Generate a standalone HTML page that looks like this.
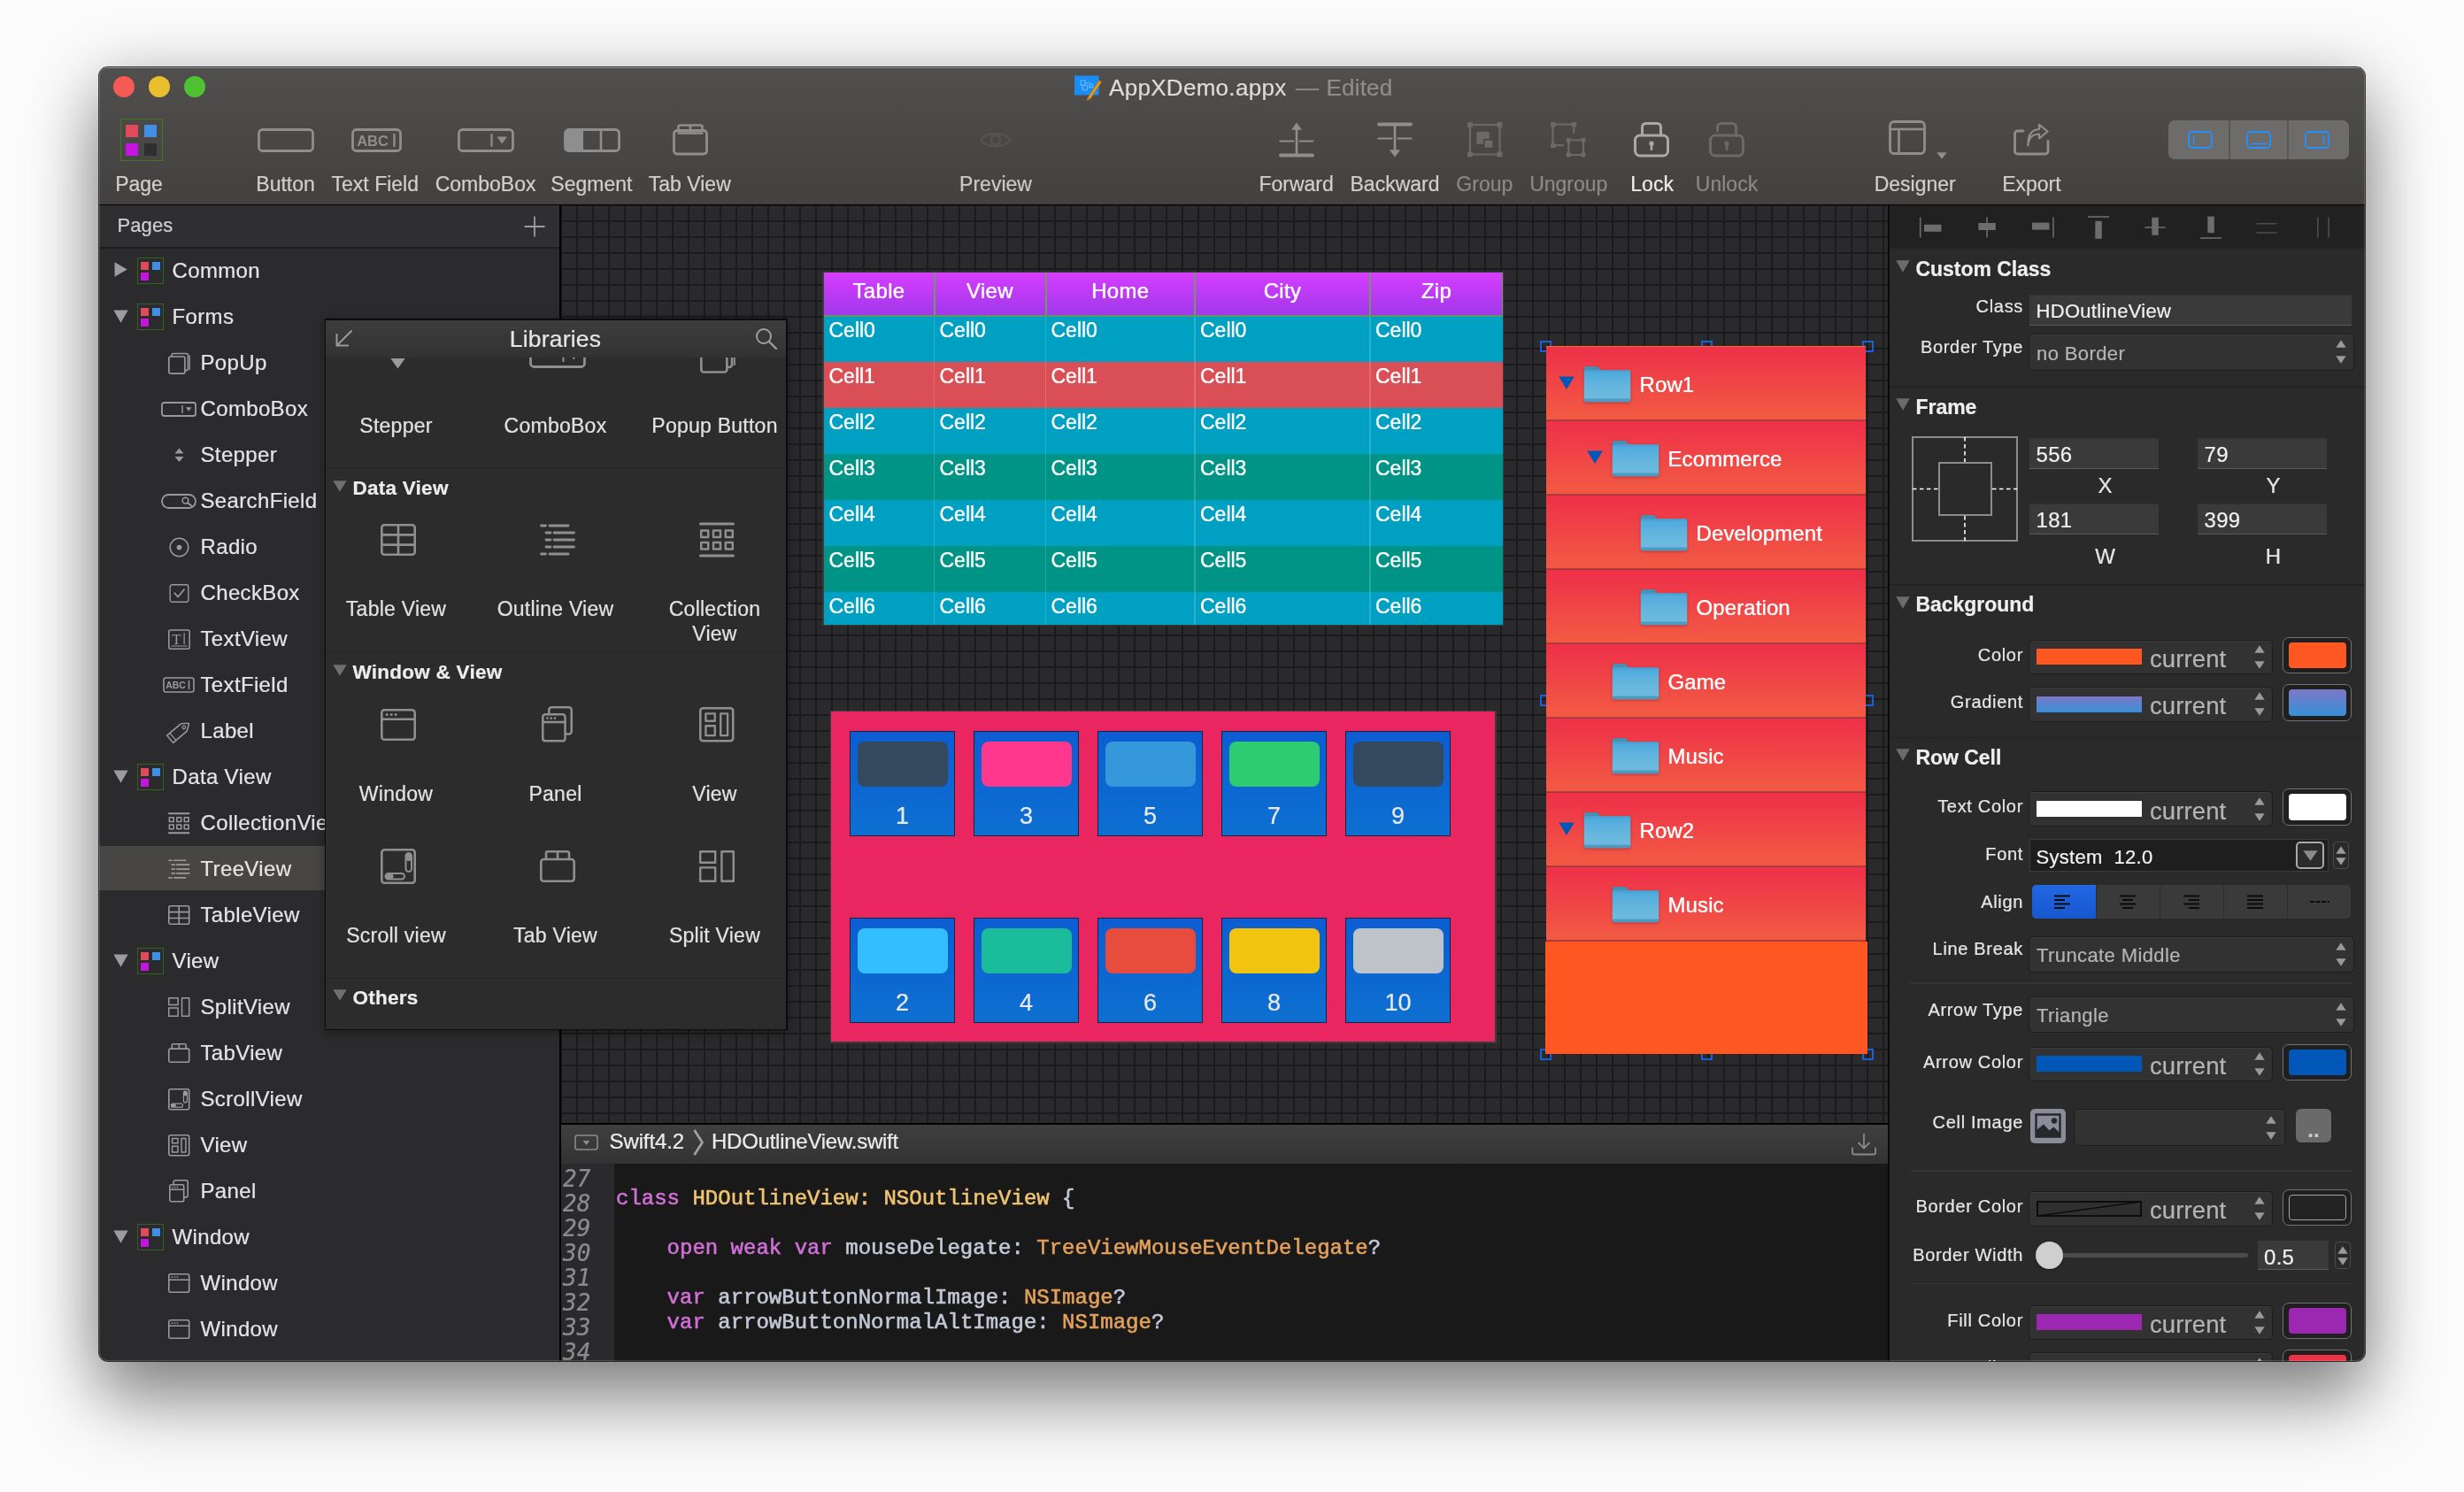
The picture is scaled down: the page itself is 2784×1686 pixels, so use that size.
<!DOCTYPE html>
<html lang="en"><head><meta charset="utf-8"><title>AppXDemo.appx</title>
<style>
html,body{margin:0;padding:0}
body{width:2784px;height:1686px;background:#fbfbfb;overflow:hidden;position:relative;font-family:"Liberation Sans",sans-serif}
.a{position:absolute;box-sizing:border-box}
.t{position:absolute;white-space:nowrap;overflow:visible;-webkit-text-stroke:0.22px currentColor}
svg{position:absolute;overflow:visible}
#win{position:absolute;left:112px;top:76px;width:2560px;height:1462px;border-radius:10px;overflow:hidden;background:#2b2b2d}
#shadow{position:absolute;left:112px;top:76px;width:2560px;height:1462px;border-radius:10px;box-shadow:0 0 0 1px rgba(0,0,0,.72),0 12px 75px rgba(0,0,0,.28),0 50px 80px rgba(0,0,0,.34)}
#edge{position:absolute;left:112px;top:76px;width:2560px;height:1462px;border-radius:10px;border:1px solid rgba(255,255,255,.16);box-sizing:border-box;pointer-events:none}
#in{position:absolute;left:-112px;top:-76px;width:2784px;height:1686px;will-change:transform}
</style></head>
<body>
<div id="shadow"></div>
<div id="win"><div id="in">
<div class="a" style="left:112px;top:76px;width:2560px;height:155px;background:linear-gradient(#514f4e,#424140);"></div>
<div class="a" style="left:112px;top:76px;width:2560px;height:1px;background:rgba(255,255,255,.28);"></div>
<div class="a" style="left:112px;top:231px;width:2560px;height:1px;background:#000;"></div>
<div class="a" style="left:127.80000000000001px;top:86.2px;width:24px;height:24px;border-radius:50%;background:#f55b54;"></div>
<div class="a" style="left:167.8px;top:86.2px;width:24px;height:24px;border-radius:50%;background:#e9bf2d;"></div>
<div class="a" style="left:207.8px;top:86.2px;width:24px;height:24px;border-radius:50%;background:#4ec232;"></div>
<svg class="a" style="left:1214px;top:85px;" width="30" height="28" viewBox="0 0 30 28"><rect x="0" y="0.5" width="27.5" height="22" fill="#1a8cf5"/><path d="M7,6h5v5h-5zM13,9h5M9,14a3,3 0 1 0 6,0a3,3 0 1 0 -6,0M17,12a2,2 0 1 0 4,0a2,2 0 1 0 -4,0" fill="none" stroke="#6fb9ff" stroke-width="1.2"/><path d="M28,6.5L16,24.5L14.8,27.8L18,26L30,8Z" fill="#f3b22c" stroke="#c98414" stroke-width="1.4"/><path d="M15,27.5l1.5,-2.5l1.1,1z" fill="#e05a6a"/></svg>
<div class="t" style="left:1253.0px;top:81.5px;width:600px;height:34px;line-height:34px;font-size:26px;color:#dcdcdc;text-align:left;letter-spacing:0.3px;">AppXDemo.appx</div>
<div class="t" style="left:1464.0px;top:81.5px;width:600px;height:34px;line-height:34px;font-size:26px;color:#8d8d8d;text-align:left;transform:scaleX(1.0);">—</div>
<div class="t" style="left:1498.5px;top:81.5px;width:600px;height:34px;line-height:34px;font-size:26px;color:#8d8d8d;text-align:left;letter-spacing:0.2px;">Edited</div>
<div class="a" style="left:136px;top:134px;width:48px;height:48px;border:1px solid #3f7a1c;"></div>
<div class="a" style="left:142px;top:141px;width:14px;height:14px;background:#e04a5a;"></div>
<div class="a" style="left:163px;top:141px;width:14px;height:14px;background:#3f8fe6;"></div>
<div class="a" style="left:142px;top:162px;width:14px;height:14px;background:#c414e0;"></div>
<div class="a" style="left:163px;top:162px;width:14px;height:14px;background:#2f2f30;"></div>
<div class="t" style="left:37.0px;top:193.3px;width:240px;height:30px;line-height:30px;font-size:23px;color:#cfcfcf;text-align:center;">Page</div>
<svg class="a" style="left:291px;top:144.5px;" width="64" height="27" viewBox="0 0 64 27"><rect x="1.5" y="1.5" width="61" height="24" rx="4" fill="none" stroke="#8e8e8e" stroke-width="2.8" stroke-linecap="round" stroke-linejoin="round" /></svg>
<div class="t" style="left:202.6px;top:193.3px;width:240px;height:30px;line-height:30px;font-size:23px;color:#cfcfcf;text-align:center;">Button</div>
<svg class="a" style="left:396.5px;top:144.5px;" width="57" height="27" viewBox="0 0 57 27"><rect x="1.5" y="1.5" width="54" height="24" rx="4" fill="none" stroke="#8e8e8e" stroke-width="2.8" stroke-linecap="round" stroke-linejoin="round" /><path d="M48.5,7V20" fill="none" stroke="#8e8e8e" stroke-width="2.4" stroke-linecap="round" stroke-linejoin="round" /><text x="24" y="19.8" font-family="Liberation Sans, sans-serif" font-weight="700" font-size="16.5" text-anchor="middle" fill="#8e8e8e">ABC</text></svg>
<div class="t" style="left:303.8px;top:193.3px;width:240px;height:30px;line-height:30px;font-size:23px;color:#cfcfcf;text-align:center;">Text Field</div>
<svg class="a" style="left:517px;top:144.5px;" width="64" height="27" viewBox="0 0 64 27"><rect x="1.5" y="1.5" width="61" height="24" rx="4" fill="none" stroke="#8e8e8e" stroke-width="2.8" stroke-linecap="round" stroke-linejoin="round" /><path d="M38.5,7V20" fill="none" stroke="#8e8e8e" stroke-width="2.2" stroke-linecap="round" stroke-linejoin="round" /><path d="M44.5,9.5h11.5l-5.75,8z" fill="#8e8e8e"/></svg>
<div class="t" style="left:428.6px;top:193.3px;width:240px;height:30px;line-height:30px;font-size:23px;color:#cfcfcf;text-align:center;">ComboBox</div>
<svg class="a" style="left:637px;top:144.5px;" width="64" height="27" viewBox="0 0 64 27"><rect x="1.5" y="1.5" width="61" height="24" rx="4" fill="none" stroke="#8e8e8e" stroke-width="2.8" stroke-linecap="round" stroke-linejoin="round" /><path d="M5,1.5H22V25.5H5a3.5,3.5 0 0 1 -3.5,-3.5V5a3.5,3.5 0 0 1 3.5,-3.5z" fill="#8e8e8e"/><path d="M42,1.5V25.5" fill="none" stroke="#8e8e8e" stroke-width="2.6" stroke-linecap="round" stroke-linejoin="round" /></svg>
<div class="t" style="left:548.4px;top:193.3px;width:240px;height:30px;line-height:30px;font-size:23px;color:#cfcfcf;text-align:center;">Segment</div>
<svg class="a" style="left:760px;top:140px;" width="40" height="36" viewBox="0 0 40 36"><rect x="1.5" y="7.5" width="37" height="26.5" rx="3.5" fill="none" stroke="#8e8e8e" stroke-width="2.8" stroke-linecap="round" stroke-linejoin="round" /><path d="M6.5,7.5V3.5a2,2 0 0 1 2,-2H31.5a2,2 0 0 1 2,2V7.5M20,1.5V10.5M6.5,10.5H33.5" fill="none" stroke="#8e8e8e" stroke-width="2.6" stroke-linecap="round" stroke-linejoin="round" /></svg>
<div class="t" style="left:659.3px;top:193.3px;width:240px;height:30px;line-height:30px;font-size:23px;color:#cfcfcf;text-align:center;">Tab View</div>
<svg class="a" style="left:1107px;top:145px;" width="36" height="26" viewBox="0 0 36 26"><path d="M1.5,13C7,3.5 29,3.5 34.5,13C29,22.5 7,22.5 1.5,13Z" fill="none" stroke="#565453" stroke-width="2.4" stroke-linecap="round" stroke-linejoin="round" /><circle cx="18" cy="13" r="5.2" fill="none" stroke="#565453" stroke-width="2.2" stroke-linecap="round" stroke-linejoin="round" /></svg>
<div class="t" style="left:1005.0px;top:193.3px;width:240px;height:30px;line-height:30px;font-size:23px;color:#c9c9c9;text-align:center;">Preview</div>
<svg class="a" style="left:1445px;top:137.5px;" width="40" height="40" viewBox="0 0 40 40"><path d="M2,37.5H38" fill="none" stroke="#8e8e8e" stroke-width="3.8" stroke-linecap="round" stroke-linejoin="round" /><path d="M1.5,21.5H16.5M23.5,21.5H38.5" fill="none" stroke="#8e8e8e" stroke-width="2.2" stroke-linecap="round" stroke-linejoin="round" /><path d="M20,36V8" fill="none" stroke="#8e8e8e" stroke-width="2.6" stroke-linecap="round" stroke-linejoin="round" /><path d="M20,0.5L26,8.8H14z" fill="#8e8e8e"/></svg>
<div class="t" style="left:1344.6px;top:193.3px;width:240px;height:30px;line-height:30px;font-size:23px;color:#cfcfcf;text-align:center;">Forward</div>
<svg class="a" style="left:1556px;top:137.5px;" width="40" height="40" viewBox="0 0 40 40"><path d="M2,2.5H38" fill="none" stroke="#8e8e8e" stroke-width="3.8" stroke-linecap="round" stroke-linejoin="round" /><path d="M1.5,18.5H16.5M23.5,18.5H38.5" fill="none" stroke="#8e8e8e" stroke-width="2.2" stroke-linecap="round" stroke-linejoin="round" /><path d="M20,4V32" fill="none" stroke="#8e8e8e" stroke-width="2.6" stroke-linecap="round" stroke-linejoin="round" /><path d="M20,39.5L26,31.2H14z" fill="#8e8e8e"/></svg>
<div class="t" style="left:1456.0px;top:193.3px;width:240px;height:30px;line-height:30px;font-size:23px;color:#cfcfcf;text-align:center;">Backward</div>
<svg class="a" style="left:1657.5px;top:138px;" width="39.5" height="39.5" viewBox="0 0 40 40"><rect x="3" y="3" width="34" height="34" fill="none" stroke="#6b6a69" stroke-width="2.2" stroke-linecap="round" stroke-linejoin="round" /><rect x="0" y="0" width="6" height="6" rx="1" fill="#6b6a69"/><rect x="34" y="0" width="6" height="6" rx="1" fill="#6b6a69"/><rect x="0" y="34" width="6" height="6" rx="1" fill="#6b6a69"/><rect x="34" y="34" width="6" height="6" rx="1" fill="#6b6a69"/><rect x="10.5" y="11" width="14.5" height="14" fill="#6b6a69"/><rect x="19" y="20" width="10.5" height="10" fill="#6b6a69" stroke="#464544" stroke-width="1.6"/></svg>
<div class="t" style="left:1557.3px;top:193.3px;width:240px;height:30px;line-height:30px;font-size:23px;color:#8a8988;text-align:center;">Group</div>
<svg class="a" style="left:1752px;top:138px;" width="39.5" height="39.5" viewBox="0 0 40 40"><path d="M26.5,12V2.5H2.5V26.5H14" fill="none" stroke="#6b6a69" stroke-width="2.2" stroke-linecap="round" stroke-linejoin="round" /><rect x="0" y="0" width="5.5" height="5.5" rx="1" fill="#6b6a69"/><rect x="24" y="0" width="5.5" height="5.5" rx="1" fill="#6b6a69"/><rect x="0" y="24" width="5.5" height="5.5" rx="1" fill="#6b6a69"/><rect x="20.5" y="20.5" width="17" height="17" fill="none" stroke="#6b6a69" stroke-width="2.2" stroke-linecap="round" stroke-linejoin="round" /><rect x="18" y="18" width="5" height="5" rx="1" fill="#6b6a69"/><rect x="35" y="18" width="5" height="5" rx="1" fill="#6b6a69"/><rect x="18" y="35" width="5" height="5" rx="1" fill="#6b6a69"/><rect x="35" y="35" width="5" height="5" rx="1" fill="#6b6a69"/></svg>
<div class="t" style="left:1652.3px;top:193.3px;width:240px;height:30px;line-height:30px;font-size:23px;color:#8a8988;text-align:center;">Ungroup</div>
<svg class="a" style="left:1846px;top:137.5px;" width="40" height="40" viewBox="0 0 40 40"><rect x="1.5" y="15" width="37" height="23" rx="5.5" fill="none" stroke="#a9a9a9" stroke-width="3" stroke-linecap="round" stroke-linejoin="round" /><path d="M9.5,15V5.5a4,4 0 0 1 4,-4H26.5a4,4 0 0 1 4,4V15" fill="none" stroke="#a9a9a9" stroke-width="3" stroke-linecap="round" stroke-linejoin="round" /><circle cx="20" cy="24.2" r="2.6" fill="#a9a9a9"/><path d="M20,25V31" fill="none" stroke="#a9a9a9" stroke-width="2.6" stroke-linecap="round" stroke-linejoin="round" /></svg>
<div class="t" style="left:1746.6px;top:193.3px;width:240px;height:30px;line-height:30px;font-size:23px;color:#ececec;text-align:center;">Lock</div>
<svg class="a" style="left:1930.5px;top:137.5px;" width="40" height="40" viewBox="0 0 40 40"><rect x="1.5" y="15" width="37" height="23" rx="5.5" fill="none" stroke="#6b6a69" stroke-width="3" stroke-linecap="round" stroke-linejoin="round" /><path d="M9.5,10V5.5a4,4 0 0 1 4,-4H26.5a4,4 0 0 1 4,4V15" fill="none" stroke="#6b6a69" stroke-width="3" stroke-linecap="round" stroke-linejoin="round" /><circle cx="20" cy="24.2" r="2.6" fill="#6b6a69"/><path d="M20,25V31" fill="none" stroke="#6b6a69" stroke-width="2.6" stroke-linecap="round" stroke-linejoin="round" /></svg>
<div class="t" style="left:1831.0px;top:193.3px;width:240px;height:30px;line-height:30px;font-size:23px;color:#8a8988;text-align:center;">Unlock</div>
<svg class="a" style="left:2133.5px;top:135.5px;" width="42" height="39" viewBox="0 0 42 39"><rect x="1.5" y="1.5" width="39" height="36" rx="4.5" fill="none" stroke="#8e8e8e" stroke-width="2.8" stroke-linecap="round" stroke-linejoin="round" /><path d="M1.5,10H40.5M11.5,10V37.5" fill="none" stroke="#8e8e8e" stroke-width="2.6" stroke-linecap="round" stroke-linejoin="round" /></svg>
<div class="t" style="left:2043.7px;top:193.3px;width:240px;height:30px;line-height:30px;font-size:23px;color:#cfcfcf;text-align:center;">Designer</div>
<svg class="a" style="left:2188px;top:172px;" width="12" height="8" viewBox="0 0 12 8"><path d="M0.3,0.3H11.7L6,7.8Z" fill="#8e8e8e"/></svg>
<svg class="a" style="left:2274.5px;top:140px;" width="41" height="36" viewBox="0 0 41 36"><path d="M11,8H4.5a3,3 0 0 0 -3,3V31a3,3 0 0 0 3,3H36a3,3 0 0 0 3,-3V19.5" fill="none" stroke="#8e8e8e" stroke-width="2.8" stroke-linecap="round" stroke-linejoin="round" /><path d="M16.5,24.5C17,15 22,11.5 29,11.5V16.5L38.5,8.5L29,0.8V6C20,6.5 16,13 16.5,24.5Z" fill="none" stroke="#8e8e8e" stroke-width="2.2" stroke-linecap="round" stroke-linejoin="round"  /></svg>
<div class="t" style="left:2175.4px;top:193.3px;width:240px;height:30px;line-height:30px;font-size:23px;color:#cfcfcf;text-align:center;">Export</div>
<div class="a" style="left:2450px;top:136px;width:204px;height:44px;background:#6d6c6b;border-radius:7px;"></div>
<div class="a" style="left:2518px;top:136px;width:1.5px;height:44px;background:#585756;"></div>
<div class="a" style="left:2584px;top:136px;width:1.5px;height:44px;background:#585756;"></div>
<svg class="a" style="left:2472px;top:148px;" width="28" height="20" viewBox="0 0 28 20"><rect x="1" y="1" width="26" height="18" rx="3.5" fill="none" stroke="#2392ff" stroke-width="1.8"/><path d="M6.5,4.5V15.5" stroke="#2392ff" stroke-width="1.6"/></svg>
<svg class="a" style="left:2538px;top:148px;" width="28" height="20" viewBox="0 0 28 20"><rect x="1" y="1" width="26" height="18" rx="3.5" fill="none" stroke="#2392ff" stroke-width="1.8"/><path d="M5,14.5H23" stroke="#2392ff" stroke-width="1.6"/></svg>
<svg class="a" style="left:2604px;top:148px;" width="28" height="20" viewBox="0 0 28 20"><rect x="1" y="1" width="26" height="18" rx="3.5" fill="none" stroke="#2392ff" stroke-width="1.8"/><path d="M21.5,4.5V15.5" stroke="#2392ff" stroke-width="1.6"/></svg>
<div class="a" style="left:112px;top:232px;width:520px;height:1306px;background:#2b2b2d;"></div>
<div class="a" style="left:112px;top:232px;width:520px;height:47px;background:#2f2f31;"></div>
<div class="a" style="left:112px;top:279px;width:520px;height:1.5px;background:#1d1d1e;"></div>
<div class="a" style="left:632px;top:232px;width:2px;height:1306px;background:#000;"></div>
<div class="t" style="left:132.5px;top:239.5px;width:600px;height:29px;line-height:29px;font-size:22px;color:#cfcfcf;text-align:left;letter-spacing:0.1px;">Pages</div>
<svg class="a" style="left:592px;top:243.5px;" width="24" height="24" viewBox="0 0 24 24"><path d="M12,0.5V23.5M0.5,12H23.5" stroke="#9c9c9c" stroke-width="1.8" fill="none"/></svg>
<svg class="a" style="left:129.0px;top:296.2px;" width="15" height="17" viewBox="0 0 15 17"><path d="M0.5,0.3V16.7L14.7,8.5Z" fill="#9c9c9c"/></svg>
<div class="a" style="left:155px;top:291.0px;width:30px;height:30px;border:1px solid #36641a;"></div>
<div class="a" style="left:159px;top:296.0px;width:9px;height:8.5px;background:#e04a5a;"></div>
<div class="a" style="left:172px;top:296.0px;width:9px;height:8.5px;background:#3f8fe6;"></div>
<div class="a" style="left:159px;top:308.0px;width:9px;height:9px;background:#c414e0;"></div>
<div class="t" style="left:194.5px;top:290.0px;width:600px;height:31px;line-height:31px;font-size:24px;color:#e4e4e4;text-align:left;letter-spacing:0.35px;">Common</div>
<svg class="a" style="left:127.5px;top:349.5px;" width="17" height="15" viewBox="0 0 17 15"><path d="M0.3,0.5H16.7L8.5,14.7Z" fill="#9c9c9c"/></svg>
<div class="a" style="left:155px;top:343.0px;width:30px;height:30px;border:1px solid #36641a;"></div>
<div class="a" style="left:159px;top:348.0px;width:9px;height:8.5px;background:#e04a5a;"></div>
<div class="a" style="left:172px;top:348.0px;width:9px;height:8.5px;background:#3f8fe6;"></div>
<div class="a" style="left:159px;top:360.0px;width:9px;height:9px;background:#c414e0;"></div>
<div class="t" style="left:194.5px;top:342.0px;width:600px;height:31px;line-height:31px;font-size:24px;color:#e4e4e4;text-align:left;letter-spacing:0.35px;">Forms</div>
<svg class="a" style="left:189.5px;top:397.5px;" width="25" height="25.0" viewBox="0 0 40 40"><rect x="1.3" y="8" width="29" height="30.5" rx="3" fill="none" stroke="#9a9a9a" stroke-width="2.6" stroke-linecap="round" stroke-linejoin="round" /><path d="M6.5,8V5.3a3,3 0 0 1 3,-3H33a3,3 0 0 1 3,3V30a3,3 0 0 1 -3,3H30.4" fill="none" stroke="#9a9a9a" stroke-width="2.6" stroke-linecap="round" stroke-linejoin="round" /><path d="M38.8,6V31" fill="none" stroke="#9a9a9a" stroke-width="2" stroke-linecap="round" stroke-linejoin="round" /></svg>
<div class="t" style="left:226.5px;top:394.0px;width:600px;height:31px;line-height:31px;font-size:24px;color:#e4e4e4;text-align:left;letter-spacing:0.35px;">PopUp</div>
<svg class="a" style="left:182.0px;top:453.5px;" width="40" height="17.0" viewBox="0 0 40 17"><rect x="1" y="1" width="38" height="15" rx="2.5" fill="none" stroke="#9a9a9a" stroke-width="1.8" stroke-linecap="round" stroke-linejoin="round" /><path d="M24,4.5V12.5" fill="none" stroke="#9a9a9a" stroke-width="1.4" stroke-linecap="round" stroke-linejoin="round" /><path d="M28,6.2h6.4l-3.2,4.6z" fill="#9a9a9a"/></svg>
<div class="t" style="left:226.5px;top:446.0px;width:600px;height:31px;line-height:31px;font-size:24px;color:#e4e4e4;text-align:left;letter-spacing:0.35px;">ComboBox</div>
<svg class="a" style="left:196.5px;top:505.8px;" width="11" height="16.5" viewBox="0 0 12 18"><path d="M6,0.5L11.5,7.2H0.5zM6,17.5L11.5,10.8H0.5z" fill="#9a9a9a"/></svg>
<div class="t" style="left:226.5px;top:498.0px;width:600px;height:31px;line-height:31px;font-size:24px;color:#e4e4e4;text-align:left;letter-spacing:0.35px;">Stepper</div>
<svg class="a" style="left:182.0px;top:557.5px;" width="40" height="17.0" viewBox="0 0 40 17"><rect x="1" y="1" width="38" height="15" rx="7.5" fill="none" stroke="#9a9a9a" stroke-width="1.8" stroke-linecap="round" stroke-linejoin="round" /><circle cx="27.5" cy="7.6" r="3.4" fill="none" stroke="#9a9a9a" stroke-width="1.5" stroke-linecap="round" stroke-linejoin="round" /><path d="M30,10.2L34.5,13.8" fill="none" stroke="#9a9a9a" stroke-width="2" stroke-linecap="round" stroke-linejoin="round" /></svg>
<div class="t" style="left:226.5px;top:550.0px;width:600px;height:31px;line-height:31px;font-size:24px;color:#e4e4e4;text-align:left;letter-spacing:0.35px;">SearchField</div>
<svg class="a" style="left:189.5px;top:605.5px;" width="25" height="25.0" viewBox="0 0 40 40"><circle cx="20" cy="20" r="16.5" fill="none" stroke="#9a9a9a" stroke-width="2.4" stroke-linecap="round" stroke-linejoin="round" /><circle cx="20" cy="20" r="4.6" fill="#9a9a9a"/></svg>
<div class="t" style="left:226.5px;top:602.0px;width:600px;height:31px;line-height:31px;font-size:24px;color:#e4e4e4;text-align:left;letter-spacing:0.35px;">Radio</div>
<svg class="a" style="left:190.5px;top:658.5px;" width="23" height="23.0" viewBox="0 0 40 40"><rect x="2" y="3" width="36" height="34" rx="4" fill="none" stroke="#9a9a9a" stroke-width="2.4" stroke-linecap="round" stroke-linejoin="round" /><path d="M11,19.5L17.5,27L29.5,12.5" fill="none" stroke="#9a9a9a" stroke-width="3" stroke-linecap="round" stroke-linejoin="round" /></svg>
<div class="t" style="left:226.5px;top:654.0px;width:600px;height:31px;line-height:31px;font-size:24px;color:#e4e4e4;text-align:left;letter-spacing:0.35px;">CheckBox</div>
<svg class="a" style="left:189.5px;top:709.5px;" width="25" height="25.0" viewBox="0 0 40 40"><rect x="1.3" y="3" width="37.4" height="34" rx="3" fill="none" stroke="#9a9a9a" stroke-width="2.4" stroke-linecap="round" stroke-linejoin="round" /><path d="M6,32H34" fill="none" stroke="#9a9a9a" stroke-width="1.8" stroke-linecap="round" stroke-linejoin="round" /><path d="M29,9V28" fill="none" stroke="#9a9a9a" stroke-width="2" stroke-linecap="round" stroke-linejoin="round" /><text x="15" y="28.5" font-family="Liberation Serif, serif" font-size="27" text-anchor="middle" fill="#9a9a9a">T</text></svg>
<div class="t" style="left:226.5px;top:706.0px;width:600px;height:31px;line-height:31px;font-size:24px;color:#e4e4e4;text-align:left;letter-spacing:0.35px;">TextView</div>
<svg class="a" style="left:184.0px;top:765.0px;" width="36" height="18.0" viewBox="0 0 36 18"><rect x="1" y="1" width="34" height="16" rx="2.5" fill="none" stroke="#9a9a9a" stroke-width="1.6" stroke-linecap="round" stroke-linejoin="round" /><path d="M29.5,4.5V13.5" fill="none" stroke="#9a9a9a" stroke-width="1.5" stroke-linecap="round" stroke-linejoin="round" /><text x="14.5" y="13.2" font-family="Liberation Sans, sans-serif" font-weight="700" font-size="10.5" text-anchor="middle" fill="#9a9a9a">ABC</text></svg>
<div class="t" style="left:226.5px;top:758.0px;width:600px;height:31px;line-height:31px;font-size:24px;color:#e4e4e4;text-align:left;letter-spacing:0.35px;">TextField</div>
<svg class="a" style="left:186.5px;top:810.5px;" width="31" height="31.0" viewBox="0 0 40 40"><g transform="rotate(-40 20 20)"><path d="M2.5,13H28a3,3 0 0 1 1.8,0.6L37.5,19a1.2,1.2 0 0 1 0,2L29.8,26.4a3,3 0 0 1 -1.8,0.6H2.5Z" fill="none" stroke="#9a9a9a" stroke-width="2" stroke-linecap="round" stroke-linejoin="round" /><circle cx="29" cy="20" r="2.3" fill="none" stroke="#9a9a9a" stroke-width="1.6" stroke-linecap="round" stroke-linejoin="round" /><path d="M8,13V27" fill="none" stroke="#9a9a9a" stroke-width="1.6" stroke-linecap="round" stroke-linejoin="round" /></g></svg>
<div class="t" style="left:226.5px;top:810.0px;width:600px;height:31px;line-height:31px;font-size:24px;color:#e4e4e4;text-align:left;letter-spacing:0.35px;">Label</div>
<svg class="a" style="left:127.5px;top:869.5px;" width="17" height="15" viewBox="0 0 17 15"><path d="M0.3,0.5H16.7L8.5,14.7Z" fill="#9c9c9c"/></svg>
<div class="a" style="left:155px;top:863.0px;width:30px;height:30px;border:1px solid #36641a;"></div>
<div class="a" style="left:159px;top:868.0px;width:9px;height:8.5px;background:#e04a5a;"></div>
<div class="a" style="left:172px;top:868.0px;width:9px;height:8.5px;background:#3f8fe6;"></div>
<div class="a" style="left:159px;top:880.0px;width:9px;height:9px;background:#c414e0;"></div>
<div class="t" style="left:194.5px;top:862.0px;width:600px;height:31px;line-height:31px;font-size:24px;color:#e4e4e4;text-align:left;letter-spacing:0.35px;">Data View</div>
<svg class="a" style="left:189.8px;top:917.8px;" width="24.5" height="24.5" viewBox="0 0 40 40"><path d="M1.5,2H38.5M1.5,38H38.5" fill="none" stroke="#9a9a9a" stroke-width="3" stroke-linecap="round" stroke-linejoin="round" /><rect x="2.2" y="9.5" width="8" height="7.5" fill="none" stroke="#9a9a9a" stroke-width="2.5" stroke-linecap="round" stroke-linejoin="round" /><rect x="16" y="9.5" width="8" height="7.5" fill="none" stroke="#9a9a9a" stroke-width="2.5" stroke-linecap="round" stroke-linejoin="round" /><rect x="29.8" y="9.5" width="8" height="7.5" fill="none" stroke="#9a9a9a" stroke-width="2.5" stroke-linecap="round" stroke-linejoin="round" /><rect x="2.2" y="23" width="8" height="7.5" fill="none" stroke="#9a9a9a" stroke-width="2.5" stroke-linecap="round" stroke-linejoin="round" /><rect x="16" y="23" width="8" height="7.5" fill="none" stroke="#9a9a9a" stroke-width="2.5" stroke-linecap="round" stroke-linejoin="round" /><rect x="29.8" y="23" width="8" height="7.5" fill="none" stroke="#9a9a9a" stroke-width="2.5" stroke-linecap="round" stroke-linejoin="round" /></svg>
<div class="t" style="left:226.5px;top:914.0px;width:600px;height:31px;line-height:31px;font-size:24px;color:#e4e4e4;text-align:left;letter-spacing:0.35px;">CollectionView</div>
<div class="a" style="left:112px;top:955.5px;width:520px;height:50px;background:#474645;"></div>
<svg class="a" style="left:189.8px;top:971.0px;" width="24.5" height="22.1" viewBox="0 0 40 36"><path d="M1.5,2h5M11,2h21M7,10h5M16,10h22.5M7,18h5M16,18h22.5M7,26h5M16,26h22.5M1.5,34h5M11,34h21" fill="none" stroke="#9a9a9a" stroke-width="2.8" stroke-linecap="round" stroke-linejoin="round" /></svg>
<div class="t" style="left:226.5px;top:966.0px;width:600px;height:31px;line-height:31px;font-size:24px;color:#e4e4e4;text-align:left;letter-spacing:0.35px;">TreeView</div>
<svg class="a" style="left:189.8px;top:1023.0px;" width="24.5" height="22.1" viewBox="0 0 40 36"><rect x="1.3" y="1.3" width="37.4" height="33.4" rx="3" fill="none" stroke="#9a9a9a" stroke-width="2.6" stroke-linecap="round" stroke-linejoin="round" /><path d="M20,1.3V34.7M1.3,12.4H38.7M1.3,23.6H38.7" fill="none" stroke="#9a9a9a" stroke-width="2.6" stroke-linecap="round" stroke-linejoin="round" /></svg>
<div class="t" style="left:226.5px;top:1018.0px;width:600px;height:31px;line-height:31px;font-size:24px;color:#e4e4e4;text-align:left;letter-spacing:0.35px;">TableView</div>
<svg class="a" style="left:127.5px;top:1077.5px;" width="17" height="15" viewBox="0 0 17 15"><path d="M0.3,0.5H16.7L8.5,14.7Z" fill="#9c9c9c"/></svg>
<div class="a" style="left:155px;top:1071.0px;width:30px;height:30px;border:1px solid #36641a;"></div>
<div class="a" style="left:159px;top:1076.0px;width:9px;height:8.5px;background:#e04a5a;"></div>
<div class="a" style="left:172px;top:1076.0px;width:9px;height:8.5px;background:#3f8fe6;"></div>
<div class="a" style="left:159px;top:1088.0px;width:9px;height:9px;background:#c414e0;"></div>
<div class="t" style="left:194.5px;top:1070.0px;width:600px;height:31px;line-height:31px;font-size:24px;color:#e4e4e4;text-align:left;letter-spacing:0.35px;">View</div>
<svg class="a" style="left:189.8px;top:1127.0px;" width="24.5" height="22.1" viewBox="0 0 40 36"><rect x="1.2" y="1.2" width="17" height="12.6" fill="none" stroke="#9a9a9a" stroke-width="2.4" stroke-linecap="round" stroke-linejoin="round" /><rect x="1.2" y="19.4" width="17" height="15.4" fill="none" stroke="#9a9a9a" stroke-width="2.4" stroke-linecap="round" stroke-linejoin="round" /><rect x="25.4" y="1.2" width="13.4" height="33.6" fill="none" stroke="#9a9a9a" stroke-width="2.4" stroke-linecap="round" stroke-linejoin="round" /></svg>
<div class="t" style="left:226.5px;top:1122.0px;width:600px;height:31px;line-height:31px;font-size:24px;color:#e4e4e4;text-align:left;letter-spacing:0.35px;">SplitView</div>
<svg class="a" style="left:189.8px;top:1179.0px;" width="24.5" height="22.1" viewBox="0 0 40 36"><rect x="1.3" y="10" width="37.4" height="24.7" rx="3" fill="none" stroke="#9a9a9a" stroke-width="2.6" stroke-linecap="round" stroke-linejoin="round" /><path d="M7,10V3.3a2,2 0 0 1 2,-2H31a2,2 0 0 1 2,2V10M20,1.3V10" fill="none" stroke="#9a9a9a" stroke-width="2.6" stroke-linecap="round" stroke-linejoin="round" /></svg>
<div class="t" style="left:226.5px;top:1174.0px;width:600px;height:31px;line-height:31px;font-size:24px;color:#e4e4e4;text-align:left;letter-spacing:0.35px;">TabView</div>
<svg class="a" style="left:189.8px;top:1229.8px;" width="24.5" height="24.5" viewBox="0 0 40 40"><rect x="1.3" y="1.3" width="37.4" height="37.4" rx="3" fill="none" stroke="#9a9a9a" stroke-width="2.6" stroke-linecap="round" stroke-linejoin="round" /><rect x="5.5" y="28" width="21.5" height="6.5" rx="3.25" fill="none" stroke="#9a9a9a" stroke-width="2" stroke-linecap="round" stroke-linejoin="round" /><rect x="5.5" y="28" width="9" height="6.5" rx="3.25" fill="#9a9a9a"/><rect x="28.5" y="5" width="6.5" height="21" rx="3.25" fill="none" stroke="#9a9a9a" stroke-width="2" stroke-linecap="round" stroke-linejoin="round" /><rect x="28.5" y="5" width="6.5" height="9" rx="3.25" fill="#9a9a9a"/></svg>
<div class="t" style="left:226.5px;top:1226.0px;width:600px;height:31px;line-height:31px;font-size:24px;color:#e4e4e4;text-align:left;letter-spacing:0.35px;">ScrollView</div>
<svg class="a" style="left:189.8px;top:1281.8px;" width="24.5" height="24.5" viewBox="0 0 40 40"><rect x="1.3" y="1.3" width="37.4" height="37.4" rx="3" fill="none" stroke="#9a9a9a" stroke-width="2.6" stroke-linecap="round" stroke-linejoin="round" /><rect x="7.5" y="7.5" width="10.5" height="8.5" fill="none" stroke="#9a9a9a" stroke-width="2.4" stroke-linecap="round" stroke-linejoin="round" /><rect x="7.5" y="21.5" width="10.5" height="11" fill="none" stroke="#9a9a9a" stroke-width="2.4" stroke-linecap="round" stroke-linejoin="round" /><rect x="24.5" y="7.5" width="8" height="25" fill="none" stroke="#9a9a9a" stroke-width="2.4" stroke-linecap="round" stroke-linejoin="round" /></svg>
<div class="t" style="left:226.5px;top:1278.0px;width:600px;height:31px;line-height:31px;font-size:24px;color:#e4e4e4;text-align:left;letter-spacing:0.35px;">View</div>
<svg class="a" style="left:191.0px;top:1333.2px;" width="22" height="25.7" viewBox="0 0 36 42"><rect x="1.3" y="9.5" width="26" height="31" rx="3" fill="none" stroke="#9a9a9a" stroke-width="2.6" stroke-linecap="round" stroke-linejoin="round" /><path d="M1.3,18.5H27.3" fill="none" stroke="#9a9a9a" stroke-width="2.6" stroke-linecap="round" stroke-linejoin="round" /><path d="M8.5,9.5V4.3a3,3 0 0 1 3,-3H31.7a3,3 0 0 1 3,3V29.5a3,3 0 0 1 -3,3H27.6" fill="none" stroke="#9a9a9a" stroke-width="2.6" stroke-linecap="round" stroke-linejoin="round" /><circle cx="6.6" cy="14" r="1.4" fill="#9a9a9a"/><circle cx="11" cy="14" r="1.4" fill="#9a9a9a"/><circle cx="15.4" cy="14" r="1.4" fill="#9a9a9a"/></svg>
<div class="t" style="left:226.5px;top:1330.0px;width:600px;height:31px;line-height:31px;font-size:24px;color:#e4e4e4;text-align:left;letter-spacing:0.35px;">Panel</div>
<svg class="a" style="left:127.5px;top:1389.5px;" width="17" height="15" viewBox="0 0 17 15"><path d="M0.3,0.5H16.7L8.5,14.7Z" fill="#9c9c9c"/></svg>
<div class="a" style="left:155px;top:1383.0px;width:30px;height:30px;border:1px solid #36641a;"></div>
<div class="a" style="left:159px;top:1388.0px;width:9px;height:8.5px;background:#e04a5a;"></div>
<div class="a" style="left:172px;top:1388.0px;width:9px;height:8.5px;background:#3f8fe6;"></div>
<div class="a" style="left:159px;top:1400.0px;width:9px;height:9px;background:#c414e0;"></div>
<div class="t" style="left:194.5px;top:1382.0px;width:600px;height:31px;line-height:31px;font-size:24px;color:#e4e4e4;text-align:left;letter-spacing:0.35px;">Window</div>
<svg class="a" style="left:189.8px;top:1439.0px;" width="24.5" height="22.1" viewBox="0 0 40 36"><rect x="1.3" y="1.3" width="37.4" height="33.4" rx="3" fill="none" stroke="#9a9a9a" stroke-width="2.6" stroke-linecap="round" stroke-linejoin="round" /><path d="M1.3,11.8H38.7" fill="none" stroke="#9a9a9a" stroke-width="2.6" stroke-linecap="round" stroke-linejoin="round" /><circle cx="7.2" cy="6.6" r="1.5" fill="#9a9a9a"/><circle cx="12.2" cy="6.6" r="1.5" fill="#9a9a9a"/><circle cx="17.2" cy="6.6" r="1.5" fill="#9a9a9a"/></svg>
<div class="t" style="left:226.5px;top:1434.0px;width:600px;height:31px;line-height:31px;font-size:24px;color:#e4e4e4;text-align:left;letter-spacing:0.35px;">Window</div>
<svg class="a" style="left:189.8px;top:1491.0px;" width="24.5" height="22.1" viewBox="0 0 40 36"><rect x="1.3" y="1.3" width="37.4" height="33.4" rx="3" fill="none" stroke="#9a9a9a" stroke-width="2.6" stroke-linecap="round" stroke-linejoin="round" /><path d="M1.3,11.8H38.7" fill="none" stroke="#9a9a9a" stroke-width="2.6" stroke-linecap="round" stroke-linejoin="round" /><circle cx="7.2" cy="6.6" r="1.5" fill="#9a9a9a"/><circle cx="12.2" cy="6.6" r="1.5" fill="#9a9a9a"/><circle cx="17.2" cy="6.6" r="1.5" fill="#9a9a9a"/></svg>
<div class="t" style="left:226.5px;top:1486.0px;width:600px;height:31px;line-height:31px;font-size:24px;color:#e4e4e4;text-align:left;letter-spacing:0.35px;">Window</div>
<div class="a" style="left:634px;top:232px;width:1499px;height:1038px;background-color:#2a2a2c;background-image:linear-gradient(to right,#1b1b1d 2px,transparent 2px),linear-gradient(to bottom,#1b1b1d 2px,transparent 2px);background-size:18px 18px;background-position:17px 17px;"></div>
<div class="a" style="left:929.0px;top:306.5px;width:770px;height:400px;background:#3c3c3e;"></div>
<div class="a" style="left:930.5px;top:308px;width:767.5px;height:49px;background:linear-gradient(#d63dff,#a038ea);"></div>
<div class="a" style="left:930.5px;top:356.5px;width:767.5px;height:52px;background:#00a0c3;"></div>
<div class="a" style="left:930.5px;top:408.5px;width:767.5px;height:52px;background:#d94f55;"></div>
<div class="a" style="left:930.5px;top:460.5px;width:767.5px;height:52px;background:#00a0c3;"></div>
<div class="a" style="left:930.5px;top:512.5px;width:767.5px;height:52px;background:#009487;"></div>
<div class="a" style="left:930.5px;top:564.5px;width:767.5px;height:52px;background:#00a0c3;"></div>
<div class="a" style="left:930.5px;top:616.5px;width:767.5px;height:52px;background:#009487;"></div>
<div class="a" style="left:930.5px;top:668.5px;width:767.5px;height:37.0px;background:#00a0c3;"></div>
<div class="t" style="left:893.0px;top:313.1px;width:200px;height:31px;line-height:31px;font-size:24px;color:#ffffff;text-align:center;letter-spacing:0.3px;text-shadow:0 0 1px rgba(255,255,255,.6);">Table</div>
<div class="t" style="left:936.5px;top:358.3px;width:600px;height:30px;line-height:30px;font-size:23px;color:#ffffff;text-align:left;text-shadow:0 0 1px rgba(255,255,255,.5);">Cell0</div>
<div class="t" style="left:936.5px;top:410.3px;width:600px;height:30px;line-height:30px;font-size:23px;color:#ffffff;text-align:left;text-shadow:0 0 1px rgba(255,255,255,.5);">Cell1</div>
<div class="t" style="left:936.5px;top:462.3px;width:600px;height:30px;line-height:30px;font-size:23px;color:#ffffff;text-align:left;text-shadow:0 0 1px rgba(255,255,255,.5);">Cell2</div>
<div class="t" style="left:936.5px;top:514.3px;width:600px;height:30px;line-height:30px;font-size:23px;color:#ffffff;text-align:left;text-shadow:0 0 1px rgba(255,255,255,.5);">Cell3</div>
<div class="t" style="left:936.5px;top:566.3px;width:600px;height:30px;line-height:30px;font-size:23px;color:#ffffff;text-align:left;text-shadow:0 0 1px rgba(255,255,255,.5);">Cell4</div>
<div class="t" style="left:936.5px;top:618.3px;width:600px;height:30px;line-height:30px;font-size:23px;color:#ffffff;text-align:left;text-shadow:0 0 1px rgba(255,255,255,.5);">Cell5</div>
<div class="t" style="left:936.5px;top:670.3px;width:600px;height:30px;line-height:30px;font-size:23px;color:#ffffff;text-align:left;text-shadow:0 0 1px rgba(255,255,255,.5);">Cell6</div>
<div class="t" style="left:1018.5px;top:313.1px;width:200px;height:31px;line-height:31px;font-size:24px;color:#ffffff;text-align:center;letter-spacing:0.3px;text-shadow:0 0 1px rgba(255,255,255,.6);">View</div>
<div class="t" style="left:1061.5px;top:358.3px;width:600px;height:30px;line-height:30px;font-size:23px;color:#ffffff;text-align:left;text-shadow:0 0 1px rgba(255,255,255,.5);">Cell0</div>
<div class="t" style="left:1061.5px;top:410.3px;width:600px;height:30px;line-height:30px;font-size:23px;color:#ffffff;text-align:left;text-shadow:0 0 1px rgba(255,255,255,.5);">Cell1</div>
<div class="t" style="left:1061.5px;top:462.3px;width:600px;height:30px;line-height:30px;font-size:23px;color:#ffffff;text-align:left;text-shadow:0 0 1px rgba(255,255,255,.5);">Cell2</div>
<div class="t" style="left:1061.5px;top:514.3px;width:600px;height:30px;line-height:30px;font-size:23px;color:#ffffff;text-align:left;text-shadow:0 0 1px rgba(255,255,255,.5);">Cell3</div>
<div class="t" style="left:1061.5px;top:566.3px;width:600px;height:30px;line-height:30px;font-size:23px;color:#ffffff;text-align:left;text-shadow:0 0 1px rgba(255,255,255,.5);">Cell4</div>
<div class="t" style="left:1061.5px;top:618.3px;width:600px;height:30px;line-height:30px;font-size:23px;color:#ffffff;text-align:left;text-shadow:0 0 1px rgba(255,255,255,.5);">Cell5</div>
<div class="t" style="left:1061.5px;top:670.3px;width:600px;height:30px;line-height:30px;font-size:23px;color:#ffffff;text-align:left;text-shadow:0 0 1px rgba(255,255,255,.5);">Cell6</div>
<div class="t" style="left:1165.8px;top:313.1px;width:200px;height:31px;line-height:31px;font-size:24px;color:#ffffff;text-align:center;letter-spacing:0.3px;text-shadow:0 0 1px rgba(255,255,255,.6);">Home</div>
<div class="t" style="left:1187.5px;top:358.3px;width:600px;height:30px;line-height:30px;font-size:23px;color:#ffffff;text-align:left;text-shadow:0 0 1px rgba(255,255,255,.5);">Cell0</div>
<div class="t" style="left:1187.5px;top:410.3px;width:600px;height:30px;line-height:30px;font-size:23px;color:#ffffff;text-align:left;text-shadow:0 0 1px rgba(255,255,255,.5);">Cell1</div>
<div class="t" style="left:1187.5px;top:462.3px;width:600px;height:30px;line-height:30px;font-size:23px;color:#ffffff;text-align:left;text-shadow:0 0 1px rgba(255,255,255,.5);">Cell2</div>
<div class="t" style="left:1187.5px;top:514.3px;width:600px;height:30px;line-height:30px;font-size:23px;color:#ffffff;text-align:left;text-shadow:0 0 1px rgba(255,255,255,.5);">Cell3</div>
<div class="t" style="left:1187.5px;top:566.3px;width:600px;height:30px;line-height:30px;font-size:23px;color:#ffffff;text-align:left;text-shadow:0 0 1px rgba(255,255,255,.5);">Cell4</div>
<div class="t" style="left:1187.5px;top:618.3px;width:600px;height:30px;line-height:30px;font-size:23px;color:#ffffff;text-align:left;text-shadow:0 0 1px rgba(255,255,255,.5);">Cell5</div>
<div class="t" style="left:1187.5px;top:670.3px;width:600px;height:30px;line-height:30px;font-size:23px;color:#ffffff;text-align:left;text-shadow:0 0 1px rgba(255,255,255,.5);">Cell6</div>
<div class="t" style="left:1349.0px;top:313.1px;width:200px;height:31px;line-height:31px;font-size:24px;color:#ffffff;text-align:center;letter-spacing:0.3px;text-shadow:0 0 1px rgba(255,255,255,.6);">City</div>
<div class="t" style="left:1356.0px;top:358.3px;width:600px;height:30px;line-height:30px;font-size:23px;color:#ffffff;text-align:left;text-shadow:0 0 1px rgba(255,255,255,.5);">Cell0</div>
<div class="t" style="left:1356.0px;top:410.3px;width:600px;height:30px;line-height:30px;font-size:23px;color:#ffffff;text-align:left;text-shadow:0 0 1px rgba(255,255,255,.5);">Cell1</div>
<div class="t" style="left:1356.0px;top:462.3px;width:600px;height:30px;line-height:30px;font-size:23px;color:#ffffff;text-align:left;text-shadow:0 0 1px rgba(255,255,255,.5);">Cell2</div>
<div class="t" style="left:1356.0px;top:514.3px;width:600px;height:30px;line-height:30px;font-size:23px;color:#ffffff;text-align:left;text-shadow:0 0 1px rgba(255,255,255,.5);">Cell3</div>
<div class="t" style="left:1356.0px;top:566.3px;width:600px;height:30px;line-height:30px;font-size:23px;color:#ffffff;text-align:left;text-shadow:0 0 1px rgba(255,255,255,.5);">Cell4</div>
<div class="t" style="left:1356.0px;top:618.3px;width:600px;height:30px;line-height:30px;font-size:23px;color:#ffffff;text-align:left;text-shadow:0 0 1px rgba(255,255,255,.5);">Cell5</div>
<div class="t" style="left:1356.0px;top:670.3px;width:600px;height:30px;line-height:30px;font-size:23px;color:#ffffff;text-align:left;text-shadow:0 0 1px rgba(255,255,255,.5);">Cell6</div>
<div class="t" style="left:1523.0px;top:313.1px;width:200px;height:31px;line-height:31px;font-size:24px;color:#ffffff;text-align:center;letter-spacing:0.3px;text-shadow:0 0 1px rgba(255,255,255,.6);">Zip</div>
<div class="t" style="left:1554.0px;top:358.3px;width:600px;height:30px;line-height:30px;font-size:23px;color:#ffffff;text-align:left;text-shadow:0 0 1px rgba(255,255,255,.5);">Cell0</div>
<div class="t" style="left:1554.0px;top:410.3px;width:600px;height:30px;line-height:30px;font-size:23px;color:#ffffff;text-align:left;text-shadow:0 0 1px rgba(255,255,255,.5);">Cell1</div>
<div class="t" style="left:1554.0px;top:462.3px;width:600px;height:30px;line-height:30px;font-size:23px;color:#ffffff;text-align:left;text-shadow:0 0 1px rgba(255,255,255,.5);">Cell2</div>
<div class="t" style="left:1554.0px;top:514.3px;width:600px;height:30px;line-height:30px;font-size:23px;color:#ffffff;text-align:left;text-shadow:0 0 1px rgba(255,255,255,.5);">Cell3</div>
<div class="t" style="left:1554.0px;top:566.3px;width:600px;height:30px;line-height:30px;font-size:23px;color:#ffffff;text-align:left;text-shadow:0 0 1px rgba(255,255,255,.5);">Cell4</div>
<div class="t" style="left:1554.0px;top:618.3px;width:600px;height:30px;line-height:30px;font-size:23px;color:#ffffff;text-align:left;text-shadow:0 0 1px rgba(255,255,255,.5);">Cell5</div>
<div class="t" style="left:1554.0px;top:670.3px;width:600px;height:30px;line-height:30px;font-size:23px;color:#ffffff;text-align:left;text-shadow:0 0 1px rgba(255,255,255,.5);">Cell6</div>
<div class="a" style="left:1054.5px;top:308px;width:2px;height:48.5px;background:#6f9a5c;"></div>
<div class="a" style="left:1054.8px;top:357px;width:1.6px;height:348.5px;background:rgba(255,255,255,.17);"></div>
<div class="a" style="left:1180.5px;top:308px;width:2px;height:48.5px;background:#6f9a5c;"></div>
<div class="a" style="left:1180.8px;top:357px;width:1.6px;height:348.5px;background:rgba(255,255,255,.17);"></div>
<div class="a" style="left:1349px;top:308px;width:2px;height:48.5px;background:#6f9a5c;"></div>
<div class="a" style="left:1349.3px;top:357px;width:1.6px;height:348.5px;background:rgba(255,255,255,.17);"></div>
<div class="a" style="left:1547px;top:308px;width:2px;height:48.5px;background:#6f9a5c;"></div>
<div class="a" style="left:1547.3px;top:357px;width:1.6px;height:348.5px;background:rgba(255,255,255,.17);"></div>
<div class="a" style="left:1696.5px;top:308px;width:1.5px;height:48.5px;background:#6f9a5c;"></div>
<div class="a" style="left:930.5px;top:356px;width:767.5px;height:1.6px;background:#5f9a62;"></div>
<div class="a" style="left:937.5px;top:802.5px;width:753px;height:376px;background:#3c3c3e;"></div>
<div class="a" style="left:939px;top:804px;width:750px;height:373px;background:#e9265f;"></div>
<div class="a" style="left:960px;top:825.5px;width:119px;height:119px;background:linear-gradient(#0c5dd2,#0d70d0);border:1.5px solid #16233f;"></div>
<div class="a" style="left:968.5px;top:837.5px;width:102px;height:51px;background:#34495e;border-radius:8px;"></div>
<div class="t" style="left:969.5px;top:904.5px;width:100px;height:35px;line-height:35px;font-size:27px;color:#e9e9e9;text-align:center;">1</div>
<div class="a" style="left:1100px;top:825.5px;width:119px;height:119px;background:linear-gradient(#0c5dd2,#0d70d0);border:1.5px solid #16233f;"></div>
<div class="a" style="left:1108.5px;top:837.5px;width:102px;height:51px;background:#ff388e;border-radius:8px;"></div>
<div class="t" style="left:1109.5px;top:904.5px;width:100px;height:35px;line-height:35px;font-size:27px;color:#e9e9e9;text-align:center;">3</div>
<div class="a" style="left:1240px;top:825.5px;width:119px;height:119px;background:linear-gradient(#0c5dd2,#0d70d0);border:1.5px solid #16233f;"></div>
<div class="a" style="left:1248.5px;top:837.5px;width:102px;height:51px;background:#3498db;border-radius:8px;"></div>
<div class="t" style="left:1249.5px;top:904.5px;width:100px;height:35px;line-height:35px;font-size:27px;color:#e9e9e9;text-align:center;">5</div>
<div class="a" style="left:1380px;top:825.5px;width:119px;height:119px;background:linear-gradient(#0c5dd2,#0d70d0);border:1.5px solid #16233f;"></div>
<div class="a" style="left:1388.5px;top:837.5px;width:102px;height:51px;background:#2ecc71;border-radius:8px;"></div>
<div class="t" style="left:1389.5px;top:904.5px;width:100px;height:35px;line-height:35px;font-size:27px;color:#e9e9e9;text-align:center;">7</div>
<div class="a" style="left:1520px;top:825.5px;width:119px;height:119px;background:linear-gradient(#0c5dd2,#0d70d0);border:1.5px solid #16233f;"></div>
<div class="a" style="left:1528.5px;top:837.5px;width:102px;height:51px;background:#34495e;border-radius:8px;"></div>
<div class="t" style="left:1529.5px;top:904.5px;width:100px;height:35px;line-height:35px;font-size:27px;color:#e9e9e9;text-align:center;">9</div>
<div class="a" style="left:960px;top:1036.8px;width:119px;height:119px;background:linear-gradient(#0c5dd2,#0d70d0);border:1.5px solid #16233f;"></div>
<div class="a" style="left:968.5px;top:1048.8px;width:102px;height:51px;background:#33bfff;border-radius:8px;"></div>
<div class="t" style="left:969.5px;top:1115.8px;width:100px;height:35px;line-height:35px;font-size:27px;color:#e9e9e9;text-align:center;">2</div>
<div class="a" style="left:1100px;top:1036.8px;width:119px;height:119px;background:linear-gradient(#0c5dd2,#0d70d0);border:1.5px solid #16233f;"></div>
<div class="a" style="left:1108.5px;top:1048.8px;width:102px;height:51px;background:#1abc9c;border-radius:8px;"></div>
<div class="t" style="left:1109.5px;top:1115.8px;width:100px;height:35px;line-height:35px;font-size:27px;color:#e9e9e9;text-align:center;">4</div>
<div class="a" style="left:1240px;top:1036.8px;width:119px;height:119px;background:linear-gradient(#0c5dd2,#0d70d0);border:1.5px solid #16233f;"></div>
<div class="a" style="left:1248.5px;top:1048.8px;width:102px;height:51px;background:#e74c3c;border-radius:8px;"></div>
<div class="t" style="left:1249.5px;top:1115.8px;width:100px;height:35px;line-height:35px;font-size:27px;color:#e9e9e9;text-align:center;">6</div>
<div class="a" style="left:1380px;top:1036.8px;width:119px;height:119px;background:linear-gradient(#0c5dd2,#0d70d0);border:1.5px solid #16233f;"></div>
<div class="a" style="left:1388.5px;top:1048.8px;width:102px;height:51px;background:#f1c40f;border-radius:8px;"></div>
<div class="t" style="left:1389.5px;top:1115.8px;width:100px;height:35px;line-height:35px;font-size:27px;color:#e9e9e9;text-align:center;">8</div>
<div class="a" style="left:1520px;top:1036.8px;width:119px;height:119px;background:linear-gradient(#0c5dd2,#0d70d0);border:1.5px solid #16233f;"></div>
<div class="a" style="left:1528.5px;top:1048.8px;width:102px;height:51px;background:#bdc3c7;border-radius:8px;"></div>
<div class="t" style="left:1529.5px;top:1115.8px;width:100px;height:35px;line-height:35px;font-size:27px;color:#e9e9e9;text-align:center;">10</div>
<div class="a" style="left:1739.5px;top:384.5px;width:13px;height:13px;border:2px solid #1660d8;"></div>
<div class="a" style="left:1739.5px;top:784.5px;width:13px;height:13px;border:2px solid #1660d8;"></div>
<div class="a" style="left:1739.5px;top:1184.5px;width:13px;height:13px;border:2px solid #1660d8;"></div>
<div class="a" style="left:1921.5px;top:384.5px;width:13px;height:13px;border:2px solid #1660d8;"></div>
<div class="a" style="left:1921.5px;top:1184.5px;width:13px;height:13px;border:2px solid #1660d8;"></div>
<div class="a" style="left:2103.5px;top:384.5px;width:13px;height:13px;border:2px solid #1660d8;"></div>
<div class="a" style="left:2103.5px;top:784.5px;width:13px;height:13px;border:2px solid #1660d8;"></div>
<div class="a" style="left:2103.5px;top:1184.5px;width:13px;height:13px;border:2px solid #1660d8;"></div>
<div class="a" style="left:1745.5px;top:1063.5px;width:364px;height:127.5px;background:#ff5722;"></div>
<div class="a" style="left:1747px;top:392px;width:361px;height:84px;background:linear-gradient(#ee3349 8%,#f25943 92%);"></div>
<div class="a" style="left:1747px;top:473.8px;width:361px;height:2.2px;background:linear-gradient(#c8423e,#96303a);"></div>
<svg class="a" style="left:1761.0px;top:425px;" width="18" height="15.5" viewBox="0 0 19 16"><path d="M0.3,0.3H18.7L9.5,15.7Z" fill="#0057b8"/></svg>
<svg class="a" style="left:1789.0px;top:412.5px;filter:drop-shadow(0 1.5px 1.5px rgba(80,0,0,.35));" width="54" height="42" viewBox="0 0 54 42"><defs><linearGradient id="fg0" x1="0" y1="0" x2="0" y2="1"><stop offset="0" stop-color="#4ca9de"/><stop offset="0.55" stop-color="#66b6de"/><stop offset="1" stop-color="#72bcdf"/></linearGradient></defs><path d="M0.7,8V3.8a2.8,2.8 0 0 1 2.8,-2.8H14.6a3,3 0 0 1 2.3,1L20.4,6.5V8Z" fill="#4a8fb3"/><rect x="0.7" y="5.2" width="52.6" height="36" rx="2.2" fill="url(#fg0)"/><rect x="0.7" y="5.2" width="52.6" height="2.2" rx="1" fill="#4f9ccb" opacity=".8"/><rect x="0.7" y="37.6" width="52.6" height="3.6" rx="1.6" fill="#438fb8" opacity=".75"/></svg>
<div class="t" style="left:1852.5px;top:419.0px;width:600px;height:31px;line-height:31px;font-size:24px;color:#ffffff;text-align:left;letter-spacing:0.1px;text-shadow:0 0 1px rgba(255,255,255,.5);">Row1</div>
<div class="a" style="left:1747px;top:476px;width:361px;height:84px;background:linear-gradient(#ee3349 8%,#f25943 92%);"></div>
<div class="a" style="left:1747px;top:557.8px;width:361px;height:2.2px;background:linear-gradient(#c8423e,#96303a);"></div>
<svg class="a" style="left:1793.0px;top:509px;" width="18" height="15.5" viewBox="0 0 19 16"><path d="M0.3,0.3H18.7L9.5,15.7Z" fill="#0057b8"/></svg>
<svg class="a" style="left:1821.0px;top:496.5px;filter:drop-shadow(0 1.5px 1.5px rgba(80,0,0,.35));" width="54" height="42" viewBox="0 0 54 42"><defs><linearGradient id="fg1" x1="0" y1="0" x2="0" y2="1"><stop offset="0" stop-color="#4ca9de"/><stop offset="0.55" stop-color="#66b6de"/><stop offset="1" stop-color="#72bcdf"/></linearGradient></defs><path d="M0.7,8V3.8a2.8,2.8 0 0 1 2.8,-2.8H14.6a3,3 0 0 1 2.3,1L20.4,6.5V8Z" fill="#4a8fb3"/><rect x="0.7" y="5.2" width="52.6" height="36" rx="2.2" fill="url(#fg1)"/><rect x="0.7" y="5.2" width="52.6" height="2.2" rx="1" fill="#4f9ccb" opacity=".8"/><rect x="0.7" y="37.6" width="52.6" height="3.6" rx="1.6" fill="#438fb8" opacity=".75"/></svg>
<div class="t" style="left:1884.5px;top:503.0px;width:600px;height:31px;line-height:31px;font-size:24px;color:#ffffff;text-align:left;letter-spacing:0.1px;text-shadow:0 0 1px rgba(255,255,255,.5);">Ecommerce</div>
<div class="a" style="left:1747px;top:560px;width:361px;height:84px;background:linear-gradient(#ee3349 8%,#f25943 92%);"></div>
<div class="a" style="left:1747px;top:641.8px;width:361px;height:2.2px;background:linear-gradient(#c8423e,#96303a);"></div>
<svg class="a" style="left:1853.0px;top:580.5px;filter:drop-shadow(0 1.5px 1.5px rgba(80,0,0,.35));" width="54" height="42" viewBox="0 0 54 42"><defs><linearGradient id="fg2" x1="0" y1="0" x2="0" y2="1"><stop offset="0" stop-color="#4ca9de"/><stop offset="0.55" stop-color="#66b6de"/><stop offset="1" stop-color="#72bcdf"/></linearGradient></defs><path d="M0.7,8V3.8a2.8,2.8 0 0 1 2.8,-2.8H14.6a3,3 0 0 1 2.3,1L20.4,6.5V8Z" fill="#4a8fb3"/><rect x="0.7" y="5.2" width="52.6" height="36" rx="2.2" fill="url(#fg2)"/><rect x="0.7" y="5.2" width="52.6" height="2.2" rx="1" fill="#4f9ccb" opacity=".8"/><rect x="0.7" y="37.6" width="52.6" height="3.6" rx="1.6" fill="#438fb8" opacity=".75"/></svg>
<div class="t" style="left:1916.5px;top:587.0px;width:600px;height:31px;line-height:31px;font-size:24px;color:#ffffff;text-align:left;letter-spacing:0.1px;text-shadow:0 0 1px rgba(255,255,255,.5);">Development</div>
<div class="a" style="left:1747px;top:644px;width:361px;height:84px;background:linear-gradient(#ee3349 8%,#f25943 92%);"></div>
<div class="a" style="left:1747px;top:725.8px;width:361px;height:2.2px;background:linear-gradient(#c8423e,#96303a);"></div>
<svg class="a" style="left:1853.0px;top:664.5px;filter:drop-shadow(0 1.5px 1.5px rgba(80,0,0,.35));" width="54" height="42" viewBox="0 0 54 42"><defs><linearGradient id="fg3" x1="0" y1="0" x2="0" y2="1"><stop offset="0" stop-color="#4ca9de"/><stop offset="0.55" stop-color="#66b6de"/><stop offset="1" stop-color="#72bcdf"/></linearGradient></defs><path d="M0.7,8V3.8a2.8,2.8 0 0 1 2.8,-2.8H14.6a3,3 0 0 1 2.3,1L20.4,6.5V8Z" fill="#4a8fb3"/><rect x="0.7" y="5.2" width="52.6" height="36" rx="2.2" fill="url(#fg3)"/><rect x="0.7" y="5.2" width="52.6" height="2.2" rx="1" fill="#4f9ccb" opacity=".8"/><rect x="0.7" y="37.6" width="52.6" height="3.6" rx="1.6" fill="#438fb8" opacity=".75"/></svg>
<div class="t" style="left:1916.5px;top:671.0px;width:600px;height:31px;line-height:31px;font-size:24px;color:#ffffff;text-align:left;letter-spacing:0.1px;text-shadow:0 0 1px rgba(255,255,255,.5);">Operation</div>
<div class="a" style="left:1747px;top:728px;width:361px;height:84px;background:linear-gradient(#ee3349 8%,#f25943 92%);"></div>
<div class="a" style="left:1747px;top:809.8px;width:361px;height:2.2px;background:linear-gradient(#c8423e,#96303a);"></div>
<svg class="a" style="left:1821.0px;top:748.5px;filter:drop-shadow(0 1.5px 1.5px rgba(80,0,0,.35));" width="54" height="42" viewBox="0 0 54 42"><defs><linearGradient id="fg4" x1="0" y1="0" x2="0" y2="1"><stop offset="0" stop-color="#4ca9de"/><stop offset="0.55" stop-color="#66b6de"/><stop offset="1" stop-color="#72bcdf"/></linearGradient></defs><path d="M0.7,8V3.8a2.8,2.8 0 0 1 2.8,-2.8H14.6a3,3 0 0 1 2.3,1L20.4,6.5V8Z" fill="#4a8fb3"/><rect x="0.7" y="5.2" width="52.6" height="36" rx="2.2" fill="url(#fg4)"/><rect x="0.7" y="5.2" width="52.6" height="2.2" rx="1" fill="#4f9ccb" opacity=".8"/><rect x="0.7" y="37.6" width="52.6" height="3.6" rx="1.6" fill="#438fb8" opacity=".75"/></svg>
<div class="t" style="left:1884.5px;top:755.0px;width:600px;height:31px;line-height:31px;font-size:24px;color:#ffffff;text-align:left;letter-spacing:0.1px;text-shadow:0 0 1px rgba(255,255,255,.5);">Game</div>
<div class="a" style="left:1747px;top:812px;width:361px;height:84px;background:linear-gradient(#ee3349 8%,#f25943 92%);"></div>
<div class="a" style="left:1747px;top:893.8px;width:361px;height:2.2px;background:linear-gradient(#c8423e,#96303a);"></div>
<svg class="a" style="left:1821.0px;top:832.5px;filter:drop-shadow(0 1.5px 1.5px rgba(80,0,0,.35));" width="54" height="42" viewBox="0 0 54 42"><defs><linearGradient id="fg5" x1="0" y1="0" x2="0" y2="1"><stop offset="0" stop-color="#4ca9de"/><stop offset="0.55" stop-color="#66b6de"/><stop offset="1" stop-color="#72bcdf"/></linearGradient></defs><path d="M0.7,8V3.8a2.8,2.8 0 0 1 2.8,-2.8H14.6a3,3 0 0 1 2.3,1L20.4,6.5V8Z" fill="#4a8fb3"/><rect x="0.7" y="5.2" width="52.6" height="36" rx="2.2" fill="url(#fg5)"/><rect x="0.7" y="5.2" width="52.6" height="2.2" rx="1" fill="#4f9ccb" opacity=".8"/><rect x="0.7" y="37.6" width="52.6" height="3.6" rx="1.6" fill="#438fb8" opacity=".75"/></svg>
<div class="t" style="left:1884.5px;top:839.0px;width:600px;height:31px;line-height:31px;font-size:24px;color:#ffffff;text-align:left;letter-spacing:0.1px;text-shadow:0 0 1px rgba(255,255,255,.5);">Music</div>
<div class="a" style="left:1747px;top:896px;width:361px;height:84px;background:linear-gradient(#ee3349 8%,#f25943 92%);"></div>
<div class="a" style="left:1747px;top:977.8px;width:361px;height:2.2px;background:linear-gradient(#c8423e,#96303a);"></div>
<svg class="a" style="left:1761.0px;top:929px;" width="18" height="15.5" viewBox="0 0 19 16"><path d="M0.3,0.3H18.7L9.5,15.7Z" fill="#0057b8"/></svg>
<svg class="a" style="left:1789.0px;top:916.5px;filter:drop-shadow(0 1.5px 1.5px rgba(80,0,0,.35));" width="54" height="42" viewBox="0 0 54 42"><defs><linearGradient id="fg6" x1="0" y1="0" x2="0" y2="1"><stop offset="0" stop-color="#4ca9de"/><stop offset="0.55" stop-color="#66b6de"/><stop offset="1" stop-color="#72bcdf"/></linearGradient></defs><path d="M0.7,8V3.8a2.8,2.8 0 0 1 2.8,-2.8H14.6a3,3 0 0 1 2.3,1L20.4,6.5V8Z" fill="#4a8fb3"/><rect x="0.7" y="5.2" width="52.6" height="36" rx="2.2" fill="url(#fg6)"/><rect x="0.7" y="5.2" width="52.6" height="2.2" rx="1" fill="#4f9ccb" opacity=".8"/><rect x="0.7" y="37.6" width="52.6" height="3.6" rx="1.6" fill="#438fb8" opacity=".75"/></svg>
<div class="t" style="left:1852.5px;top:923.0px;width:600px;height:31px;line-height:31px;font-size:24px;color:#ffffff;text-align:left;letter-spacing:0.1px;text-shadow:0 0 1px rgba(255,255,255,.5);">Row2</div>
<div class="a" style="left:1747px;top:980px;width:361px;height:84px;background:linear-gradient(#ee3349 8%,#f25943 92%);"></div>
<div class="a" style="left:1747px;top:1061.8px;width:361px;height:2.2px;background:linear-gradient(#c8423e,#96303a);"></div>
<svg class="a" style="left:1821.0px;top:1000.5px;filter:drop-shadow(0 1.5px 1.5px rgba(80,0,0,.35));" width="54" height="42" viewBox="0 0 54 42"><defs><linearGradient id="fg7" x1="0" y1="0" x2="0" y2="1"><stop offset="0" stop-color="#4ca9de"/><stop offset="0.55" stop-color="#66b6de"/><stop offset="1" stop-color="#72bcdf"/></linearGradient></defs><path d="M0.7,8V3.8a2.8,2.8 0 0 1 2.8,-2.8H14.6a3,3 0 0 1 2.3,1L20.4,6.5V8Z" fill="#4a8fb3"/><rect x="0.7" y="5.2" width="52.6" height="36" rx="2.2" fill="url(#fg7)"/><rect x="0.7" y="5.2" width="52.6" height="2.2" rx="1" fill="#4f9ccb" opacity=".8"/><rect x="0.7" y="37.6" width="52.6" height="3.6" rx="1.6" fill="#438fb8" opacity=".75"/></svg>
<div class="t" style="left:1884.5px;top:1007.0px;width:600px;height:31px;line-height:31px;font-size:24px;color:#ffffff;text-align:left;letter-spacing:0.1px;text-shadow:0 0 1px rgba(255,255,255,.5);">Music</div>
<div class="a" style="left:1747px;top:390.5px;width:361px;height:1.5px;background:#ff6a2a;"></div>
<div class="a" style="left:366.5px;top:360.0px;width:523px;height:804px;background:#0c0c0c;box-shadow:0 2px 10px rgba(0,0,0,.4);"></div>
<div class="a" style="left:368px;top:361.5px;width:520px;height:801px;background:#2c2c2d;"></div>
<div class="a" style="left:368px;top:361.5px;width:520px;height:42px;background:linear-gradient(#3d3d3d,#323232);"></div>
<div class="t" style="left:477.5px;top:365.8px;width:300px;height:34px;line-height:34px;font-size:26.5px;color:#e6e6e6;text-align:center;letter-spacing:0.2px;">Libraries</div>
<svg class="a" style="left:379px;top:372px;" width="20" height="20" viewBox="0 0 20 20"><path d="M18.5,1.5L2,18M1.5,5V18.5H15" fill="none" stroke="#9a9a9a" stroke-width="2"/></svg>
<svg class="a" style="left:853px;top:369.5px;" width="26" height="26" viewBox="0 0 26 26"><circle cx="10" cy="10" r="8" fill="none" stroke="#9e9e9e" stroke-width="2"/><path d="M16,16L24,24" stroke="#9e9e9e" stroke-width="2.4" stroke-linecap="round"/></svg>
<div class="a" style="left:368px;top:403.5px;width:520px;height:60px;overflow:hidden">
<svg style="left:73px;top:1px" width="17" height="12" viewBox="0 0 17 12"><path d="M0.3,0H16.7L8.5,11.5Z" fill="#9a9a9a"/></svg>
<svg style="left:230px;top:-15px" width="64" height="27" viewBox="0 0 64 27"><rect x="1.5" y="1.5" width="61" height="24" rx="4" fill="none" stroke="#8f8f8f" stroke-width="2.8"/><path d="M38.5,7V20" stroke="#8f8f8f" stroke-width="2.2"/><path d="M44.5,9.5h11.5l-5.75,8z" fill="#8f8f8f"/></svg>
<svg style="left:421.5px;top:-21.5px" width="42" height="40" viewBox="0 0 40 40"><rect x="1.3" y="8" width="29" height="30.5" rx="3" fill="none" stroke="#8f8f8f" stroke-width="2.6"/><path d="M6.5,8V5.3a3,3 0 0 1 3,-3H33a3,3 0 0 1 3,3V30a3,3 0 0 1 -3,3H30.4" fill="none" stroke="#8f8f8f" stroke-width="2.6"/><path d="M38.8,6V31" stroke="#8f8f8f" stroke-width="2"/></svg>
</div>
<div class="t" style="left:347.5px;top:465.5px;width:200px;height:30px;line-height:30px;font-size:23px;color:#e2e2e2;text-align:center;letter-spacing:0.25px;">Stepper</div>
<div class="t" style="left:527.5px;top:465.5px;width:200px;height:30px;line-height:30px;font-size:23px;color:#e2e2e2;text-align:center;letter-spacing:0.25px;">ComboBox</div>
<div class="t" style="left:707.5px;top:465.5px;width:200px;height:30px;line-height:30px;font-size:23px;color:#e2e2e2;text-align:center;letter-spacing:0.25px;">Popup Button</div>
<div class="a" style="left:368px;top:528.5px;width:520px;height:1.5px;background:#242425;"></div>
<svg class="a" style="left:376px;top:542.5px;" width="16" height="13" viewBox="0 0 16 13"><path d="M0.3,0.3H15.7L8,12.7Z" fill="#6f6f6f"/></svg>
<div class="t" style="left:398.5px;top:537.0px;width:600px;height:29px;line-height:29px;font-size:22.5px;color:#ededed;text-align:left;font-weight:700;letter-spacing:0.25px;">Data View</div>
<svg class="a" style="left:429.5px;top:592.0px;" width="40" height="36.0" viewBox="0 0 40 36"><rect x="1.3" y="1.3" width="37.4" height="33.4" rx="3" fill="none" stroke="#8f8f8f" stroke-width="2.6" stroke-linecap="round" stroke-linejoin="round" /><path d="M20,1.3V34.7M1.3,12.4H38.7M1.3,23.6H38.7" fill="none" stroke="#8f8f8f" stroke-width="2.6" stroke-linecap="round" stroke-linejoin="round" /></svg>
<div class="t" style="left:347.5px;top:673.0px;width:200px;height:30px;line-height:30px;font-size:23px;color:#e2e2e2;text-align:center;letter-spacing:0.25px;">Table View</div>
<svg class="a" style="left:609.5px;top:592.0px;" width="40" height="36.0" viewBox="0 0 40 36"><path d="M1.5,2h5M11,2h21M7,10h5M16,10h22.5M7,18h5M16,18h22.5M7,26h5M16,26h22.5M1.5,34h5M11,34h21" fill="none" stroke="#8f8f8f" stroke-width="2.8" stroke-linecap="round" stroke-linejoin="round" /></svg>
<div class="t" style="left:527.5px;top:673.0px;width:200px;height:30px;line-height:30px;font-size:23px;color:#e2e2e2;text-align:center;letter-spacing:0.25px;">Outline View</div>
<svg class="a" style="left:789.5px;top:590.0px;" width="40" height="40.0" viewBox="0 0 40 40"><path d="M1.5,2H38.5M1.5,38H38.5" fill="none" stroke="#8f8f8f" stroke-width="3" stroke-linecap="round" stroke-linejoin="round" /><rect x="2.2" y="9.5" width="8" height="7.5" fill="none" stroke="#8f8f8f" stroke-width="2.5" stroke-linecap="round" stroke-linejoin="round" /><rect x="16" y="9.5" width="8" height="7.5" fill="none" stroke="#8f8f8f" stroke-width="2.5" stroke-linecap="round" stroke-linejoin="round" /><rect x="29.8" y="9.5" width="8" height="7.5" fill="none" stroke="#8f8f8f" stroke-width="2.5" stroke-linecap="round" stroke-linejoin="round" /><rect x="2.2" y="23" width="8" height="7.5" fill="none" stroke="#8f8f8f" stroke-width="2.5" stroke-linecap="round" stroke-linejoin="round" /><rect x="16" y="23" width="8" height="7.5" fill="none" stroke="#8f8f8f" stroke-width="2.5" stroke-linecap="round" stroke-linejoin="round" /><rect x="29.8" y="23" width="8" height="7.5" fill="none" stroke="#8f8f8f" stroke-width="2.5" stroke-linecap="round" stroke-linejoin="round" /></svg>
<div class="t" style="left:707.5px;top:673.0px;width:200px;height:30px;line-height:30px;font-size:23px;color:#e2e2e2;text-align:center;letter-spacing:0.25px;">Collection</div>
<div class="t" style="left:707.5px;top:701.0px;width:200px;height:30px;line-height:30px;font-size:23px;color:#e2e2e2;text-align:center;letter-spacing:0.25px;">View</div>
<div class="a" style="left:368px;top:736.5px;width:520px;height:1.5px;background:#242425;"></div>
<svg class="a" style="left:376px;top:750.5px;" width="16" height="13" viewBox="0 0 16 13"><path d="M0.3,0.3H15.7L8,12.7Z" fill="#6f6f6f"/></svg>
<div class="t" style="left:398.5px;top:745.0px;width:600px;height:29px;line-height:29px;font-size:22.5px;color:#ededed;text-align:left;font-weight:700;letter-spacing:0.25px;">Window &amp; View</div>
<svg class="a" style="left:429.5px;top:800.5px;" width="40" height="36.0" viewBox="0 0 40 36"><rect x="1.3" y="1.3" width="37.4" height="33.4" rx="3" fill="none" stroke="#8f8f8f" stroke-width="2.6" stroke-linecap="round" stroke-linejoin="round" /><path d="M1.3,11.8H38.7" fill="none" stroke="#8f8f8f" stroke-width="2.6" stroke-linecap="round" stroke-linejoin="round" /><circle cx="7.2" cy="6.6" r="1.5" fill="#8f8f8f"/><circle cx="12.2" cy="6.6" r="1.5" fill="#8f8f8f"/><circle cx="17.2" cy="6.6" r="1.5" fill="#8f8f8f"/></svg>
<div class="t" style="left:347.5px;top:881.5px;width:200px;height:30px;line-height:30px;font-size:23px;color:#e2e2e2;text-align:center;letter-spacing:0.25px;">Window</div>
<svg class="a" style="left:612.0px;top:798.1px;" width="35" height="40.8" viewBox="0 0 36 42"><rect x="1.3" y="9.5" width="26" height="31" rx="3" fill="none" stroke="#8f8f8f" stroke-width="2.6" stroke-linecap="round" stroke-linejoin="round" /><path d="M1.3,18.5H27.3" fill="none" stroke="#8f8f8f" stroke-width="2.6" stroke-linecap="round" stroke-linejoin="round" /><path d="M8.5,9.5V4.3a3,3 0 0 1 3,-3H31.7a3,3 0 0 1 3,3V29.5a3,3 0 0 1 -3,3H27.6" fill="none" stroke="#8f8f8f" stroke-width="2.6" stroke-linecap="round" stroke-linejoin="round" /><circle cx="6.6" cy="14" r="1.4" fill="#8f8f8f"/><circle cx="11" cy="14" r="1.4" fill="#8f8f8f"/><circle cx="15.4" cy="14" r="1.4" fill="#8f8f8f"/></svg>
<div class="t" style="left:527.5px;top:881.5px;width:200px;height:30px;line-height:30px;font-size:23px;color:#e2e2e2;text-align:center;letter-spacing:0.25px;">Panel</div>
<svg class="a" style="left:789.8px;top:798.8px;" width="39.5" height="39.5" viewBox="0 0 40 40"><rect x="1.3" y="1.3" width="37.4" height="37.4" rx="3" fill="none" stroke="#8f8f8f" stroke-width="2.6" stroke-linecap="round" stroke-linejoin="round" /><rect x="7.5" y="7.5" width="10.5" height="8.5" fill="none" stroke="#8f8f8f" stroke-width="2.4" stroke-linecap="round" stroke-linejoin="round" /><rect x="7.5" y="21.5" width="10.5" height="11" fill="none" stroke="#8f8f8f" stroke-width="2.4" stroke-linecap="round" stroke-linejoin="round" /><rect x="24.5" y="7.5" width="8" height="25" fill="none" stroke="#8f8f8f" stroke-width="2.4" stroke-linecap="round" stroke-linejoin="round" /></svg>
<div class="t" style="left:707.5px;top:881.5px;width:200px;height:30px;line-height:30px;font-size:23px;color:#e2e2e2;text-align:center;letter-spacing:0.25px;">View</div>
<svg class="a" style="left:429.5px;top:958.5px;" width="40" height="40.0" viewBox="0 0 40 40"><rect x="1.3" y="1.3" width="37.4" height="37.4" rx="3" fill="none" stroke="#8f8f8f" stroke-width="2.6" stroke-linecap="round" stroke-linejoin="round" /><rect x="5.5" y="28" width="21.5" height="6.5" rx="3.25" fill="none" stroke="#8f8f8f" stroke-width="2" stroke-linecap="round" stroke-linejoin="round" /><rect x="5.5" y="28" width="9" height="6.5" rx="3.25" fill="#8f8f8f"/><rect x="28.5" y="5" width="6.5" height="21" rx="3.25" fill="none" stroke="#8f8f8f" stroke-width="2" stroke-linecap="round" stroke-linejoin="round" /><rect x="28.5" y="5" width="6.5" height="9" rx="3.25" fill="#8f8f8f"/></svg>
<div class="t" style="left:347.5px;top:1041.5px;width:200px;height:30px;line-height:30px;font-size:23px;color:#e2e2e2;text-align:center;letter-spacing:0.25px;">Scroll view</div>
<svg class="a" style="left:609.5px;top:960.5px;" width="40" height="36.0" viewBox="0 0 40 36"><rect x="1.3" y="10" width="37.4" height="24.7" rx="3" fill="none" stroke="#8f8f8f" stroke-width="2.6" stroke-linecap="round" stroke-linejoin="round" /><path d="M7,10V3.3a2,2 0 0 1 2,-2H31a2,2 0 0 1 2,2V10M20,1.3V10" fill="none" stroke="#8f8f8f" stroke-width="2.6" stroke-linecap="round" stroke-linejoin="round" /></svg>
<div class="t" style="left:527.5px;top:1041.5px;width:200px;height:30px;line-height:30px;font-size:23px;color:#e2e2e2;text-align:center;letter-spacing:0.25px;">Tab View</div>
<svg class="a" style="left:789.5px;top:960.5px;" width="40" height="36.0" viewBox="0 0 40 36"><rect x="1.2" y="1.2" width="17" height="12.6" fill="none" stroke="#8f8f8f" stroke-width="2.4" stroke-linecap="round" stroke-linejoin="round" /><rect x="1.2" y="19.4" width="17" height="15.4" fill="none" stroke="#8f8f8f" stroke-width="2.4" stroke-linecap="round" stroke-linejoin="round" /><rect x="25.4" y="1.2" width="13.4" height="33.6" fill="none" stroke="#8f8f8f" stroke-width="2.4" stroke-linecap="round" stroke-linejoin="round" /></svg>
<div class="t" style="left:707.5px;top:1041.5px;width:200px;height:30px;line-height:30px;font-size:23px;color:#e2e2e2;text-align:center;letter-spacing:0.25px;">Split View</div>
<div class="a" style="left:368px;top:1104.5px;width:520px;height:1.5px;background:#242425;"></div>
<svg class="a" style="left:376px;top:1118px;" width="16" height="13" viewBox="0 0 16 13"><path d="M0.3,0.3H15.7L8,12.7Z" fill="#6f6f6f"/></svg>
<div class="t" style="left:398.5px;top:1112.5px;width:600px;height:29px;line-height:29px;font-size:22.5px;color:#ededed;text-align:left;font-weight:700;letter-spacing:0.25px;">Others</div>
<div class="a" style="left:634px;top:1268.5px;width:1499px;height:2px;background:#000;"></div>
<div class="a" style="left:634px;top:1270.5px;width:1499px;height:44.5px;background:linear-gradient(#3f3f3f,#333333);"></div>
<div class="a" style="left:634px;top:1315px;width:1499px;height:223px;background:#191919;"></div>
<div class="a" style="left:634px;top:1315px;width:60px;height:223px;background:#2a2a2c;"></div>
<svg class="a" style="left:648.5px;top:1282px;" width="27" height="18" viewBox="0 0 27 18"><rect x="1" y="1" width="25" height="16" rx="2.5" fill="none" stroke="#8a8a8a" stroke-width="1.6"/><path d="M9.5,7h8l-4,5z" fill="#8a8a8a"/></svg>
<div class="t" style="left:688.5px;top:1274.0px;width:600px;height:31px;line-height:31px;font-size:24px;color:#ececec;text-align:left;letter-spacing:-0.1px;">Swift4.2</div>
<svg class="a" style="left:783px;top:1276px;" width="12" height="30" viewBox="0 0 12 30"><path d="M1.5,1L10.5,15L1.5,29" fill="none" stroke="#a2a2a2" stroke-width="2.7"/></svg>
<div class="t" style="left:804.0px;top:1274.0px;width:600px;height:31px;line-height:31px;font-size:24px;color:#ececec;text-align:left;letter-spacing:-0.25px;">HDOutlineView.swift</div>
<svg class="a" style="left:2092px;top:1280px;" width="28" height="26" viewBox="0 0 28 26"><path d="M14,1V17M7.5,11L14,17.5L20.5,11M1,16.5V22.5a2,2 0 0 0 2,2H25a2,2 0 0 0 2,-2V16.5" fill="none" stroke="#8a8a8a" stroke-width="1.8"/></svg>
<div class="t" style="left:636.0px;top:1315.0px;width:600px;height:34px;line-height:34px;font-size:26px;color:#8c8c8c;text-align:left;font-family:'DejaVu Sans Mono', monospace;font-style:italic;">27</div>
<div class="t" style="left:636.0px;top:1343.0px;width:600px;height:34px;line-height:34px;font-size:26px;color:#8c8c8c;text-align:left;font-family:'DejaVu Sans Mono', monospace;font-style:italic;">28</div>
<div class="t" style="left:696.0px;top:1339.0px;width:1400px;height:31px;line-height:31px;font-size:24px;color:#c3c8d6;text-align:left;font-family:'Liberation Mono', monospace;white-space:pre;-webkit-text-stroke:0.6px currentColor;"><span style="color:#d06fd6">class</span> <span style="color:#efc371">HDOutlineView: NSOutlineView</span> <span style="color:#c3c8d6">{</span></div>
<div class="t" style="left:636.0px;top:1371.1px;width:600px;height:34px;line-height:34px;font-size:26px;color:#8c8c8c;text-align:left;font-family:'DejaVu Sans Mono', monospace;font-style:italic;">29</div>
<div class="t" style="left:636.0px;top:1399.2px;width:600px;height:34px;line-height:34px;font-size:26px;color:#8c8c8c;text-align:left;font-family:'DejaVu Sans Mono', monospace;font-style:italic;">30</div>
<div class="t" style="left:696.0px;top:1395.2px;width:1400px;height:31px;line-height:31px;font-size:24px;color:#c3c8d6;text-align:left;font-family:'Liberation Mono', monospace;white-space:pre;-webkit-text-stroke:0.6px currentColor;">    <span style="color:#d06fd6">open weak var</span> <span style="color:#c3c8d6">mouseDelegate: </span><span style="color:#e3a05c">TreeViewMouseEventDelegate</span><span style="color:#c3c8d6">?</span></div>
<div class="t" style="left:636.0px;top:1427.2px;width:600px;height:34px;line-height:34px;font-size:26px;color:#8c8c8c;text-align:left;font-family:'DejaVu Sans Mono', monospace;font-style:italic;">31</div>
<div class="t" style="left:636.0px;top:1455.2px;width:600px;height:34px;line-height:34px;font-size:26px;color:#8c8c8c;text-align:left;font-family:'DejaVu Sans Mono', monospace;font-style:italic;">32</div>
<div class="t" style="left:696.0px;top:1451.2px;width:1400px;height:31px;line-height:31px;font-size:24px;color:#c3c8d6;text-align:left;font-family:'Liberation Mono', monospace;white-space:pre;-webkit-text-stroke:0.6px currentColor;">    <span style="color:#d06fd6">var</span> <span style="color:#c3c8d6">arrowButtonNormalImage: </span><span style="color:#e3a05c">NSImage</span><span style="color:#c3c8d6">?</span></div>
<div class="t" style="left:636.0px;top:1483.3px;width:600px;height:34px;line-height:34px;font-size:26px;color:#8c8c8c;text-align:left;font-family:'DejaVu Sans Mono', monospace;font-style:italic;">33</div>
<div class="t" style="left:696.0px;top:1479.3px;width:1400px;height:31px;line-height:31px;font-size:24px;color:#c3c8d6;text-align:left;font-family:'Liberation Mono', monospace;white-space:pre;-webkit-text-stroke:0.6px currentColor;">    <span style="color:#d06fd6">var</span> <span style="color:#c3c8d6">arrowButtonNormalAltImage: </span><span style="color:#e3a05c">NSImage</span><span style="color:#c3c8d6">?</span></div>
<div class="t" style="left:636.0px;top:1511.3px;width:600px;height:34px;line-height:34px;font-size:26px;color:#8c8c8c;text-align:left;font-family:'DejaVu Sans Mono', monospace;font-style:italic;">34</div>
<div class="a" style="left:2133px;top:232px;width:2px;height:1306px;background:#0b0b0b;"></div>
<div class="a" style="left:2135px;top:232px;width:537px;height:1306px;background:#2a2a2a;"></div>
<div class="a" style="left:2135px;top:232px;width:537px;height:49px;background:#212121;"></div>
<svg class="a" style="left:2166.5px;top:243px;" width="28" height="28" viewBox="0 0 28 28"><path d="M2.7,2.5V25.5" stroke="#6d6d6d" stroke-width="1.6"/><rect x="7" y="10.8" width="19.5" height="8" fill="#6d6d6d"/></svg>
<svg class="a" style="left:2231px;top:243px;" width="28" height="28" viewBox="0 0 28 28"><path d="M14,2.5V25.5" stroke="#6d6d6d" stroke-width="1.6"/><rect x="4.3" y="9" width="19.5" height="8" fill="#6d6d6d"/></svg>
<svg class="a" style="left:2294px;top:243px;" width="28" height="28" viewBox="0 0 28 28"><path d="M26,2.5V25.5" stroke="#6d6d6d" stroke-width="1.6"/><rect x="2" y="8.6" width="19.5" height="8" fill="#6d6d6d"/></svg>
<svg class="a" style="left:2357px;top:243px;" width="28" height="28" viewBox="0 0 28 28"><path d="M2,2H26" stroke="#6d6d6d" stroke-width="1.6"/><rect x="10.3" y="6.8" width="7.5" height="20" fill="#6d6d6d"/></svg>
<svg class="a" style="left:2420.8px;top:243px;" width="28" height="28" viewBox="0 0 28 28"><path d="M2.5,14H25.5" stroke="#6d6d6d" stroke-width="1.6"/><rect x="10.3" y="2.8" width="7.5" height="20" fill="#6d6d6d"/></svg>
<svg class="a" style="left:2483.8px;top:243px;" width="28" height="28" viewBox="0 0 28 28"><path d="M2,26H26" stroke="#6d6d6d" stroke-width="1.6"/><rect x="10.3" y="1.6" width="7.5" height="18.5" fill="#6d6d6d"/></svg>
<svg class="a" style="left:2547px;top:243px;" width="28" height="28" viewBox="0 0 28 28"><path d="M2.5,9.7H25.5M2.5,20H25.5" stroke="#4d4d4d" stroke-width="1.6"/></svg>
<svg class="a" style="left:2611px;top:243px;" width="28" height="28" viewBox="0 0 28 28"><path d="M7.8,2.5V25.5M20.2,2.5V25.5" stroke="#4d4d4d" stroke-width="1.6"/></svg>
<svg class="a" style="left:2142px;top:294.0px;" width="16" height="14" viewBox="0 0 16 14"><path d="M0.3,0.3H15.7L8,13.7Z" fill="#6c6c6c"/></svg>
<div class="t" style="left:2164.5px;top:288.5px;width:600px;height:30px;line-height:30px;font-size:23px;color:#efefef;text-align:left;font-weight:700;letter-spacing:-0.05px;">Custom Class</div>
<div class="t" style="left:2086.0px;top:333.0px;width:200px;height:26px;line-height:26px;font-size:20px;color:#e6e6e6;text-align:right;letter-spacing:0.68px;">Class</div>
<div class="a" style="left:2293px;top:332.5px;width:364px;height:35.5px;background:#3a3a3a;border-bottom:1.5px solid #5a5a5a;border-top:1px solid #323232;"></div>
<div class="t" style="left:2300.5px;top:336.8px;width:600px;height:29px;line-height:29px;font-size:22px;color:#f0f0f0;text-align:left;letter-spacing:0.3px;">HDOutlineView</div>
<div class="t" style="left:2086.0px;top:379.0px;width:200px;height:26px;line-height:26px;font-size:20px;color:#e6e6e6;text-align:right;letter-spacing:0.68px;">Border Type</div>
<div class="a" style="left:2292px;top:377px;width:368px;height:41.5px;background:#323232;border:1px solid #1c1c1c;border-radius:5px;box-shadow:inset 0 1px 0 rgba(255,255,255,.05);"></div>
<svg class="a" style="left:2638.5px;top:384.25px;" width="12" height="9" viewBox="0 0 12 9"><path d="M6,0.3L11.7,8.7H0.3Z" fill="#9a9a9a"/></svg>
<svg class="a" style="left:2638.5px;top:402.25px;" width="12" height="9" viewBox="0 0 12 9"><path d="M6,8.7L11.7,0.3H0.3Z" fill="#9a9a9a"/></svg>
<div class="t" style="left:2301.0px;top:384.8px;width:600px;height:29px;line-height:29px;font-size:22px;color:#b4b4b4;text-align:left;letter-spacing:0.4px;">no Border</div>
<div class="a" style="left:2135px;top:436px;width:537px;height:1.5px;background:#232323;"></div>
<svg class="a" style="left:2142px;top:450.0px;" width="16" height="14" viewBox="0 0 16 14"><path d="M0.3,0.3H15.7L8,13.7Z" fill="#6c6c6c"/></svg>
<div class="t" style="left:2164.5px;top:444.5px;width:600px;height:30px;line-height:30px;font-size:23px;color:#efefef;text-align:left;font-weight:700;letter-spacing:-0.05px;">Frame</div>
<div class="a" style="left:2160px;top:492.5px;width:120px;height:119px;border:2px solid #8c8c8c;"></div>
<div class="a" style="left:2189.5px;top:521.5px;width:61.5px;height:61px;border:2px solid #8c8c8c;"></div>
<svg class="a" style="left:2160px;top:492.5px;" width="120" height="119" viewBox="0 0 120 119"><path d="M60,1V29M60,90V118M1,59.5H29.5M91,59.5H119" stroke="#ffffff" stroke-width="1.6" stroke-dasharray="4.5 3.5" fill="none"/></svg>
<div class="a" style="left:2293px;top:494.5px;width:146px;height:35px;background:#3a3a3a;border-bottom:1.5px solid #5a5a5a;border-top:1px solid #323232;"></div>
<div class="t" style="left:2300.5px;top:497.5px;width:600px;height:31px;line-height:31px;font-size:24px;color:#f0f0f0;text-align:left;letter-spacing:0.3px;">556</div>
<div class="a" style="left:2483px;top:494.5px;width:146px;height:35px;background:#3a3a3a;border-bottom:1.5px solid #5a5a5a;border-top:1px solid #323232;"></div>
<div class="t" style="left:2490.5px;top:497.5px;width:600px;height:31px;line-height:31px;font-size:24px;color:#f0f0f0;text-align:left;letter-spacing:0.3px;">79</div>
<div class="t" style="left:2348.5px;top:533.0px;width:60px;height:31px;line-height:31px;font-size:24px;color:#e6e6e6;text-align:center;">X</div>
<div class="t" style="left:2538.5px;top:533.0px;width:60px;height:31px;line-height:31px;font-size:24px;color:#e6e6e6;text-align:center;">Y</div>
<div class="a" style="left:2293px;top:568.5px;width:146px;height:35px;background:#3a3a3a;border-bottom:1.5px solid #5a5a5a;border-top:1px solid #323232;"></div>
<div class="t" style="left:2300.5px;top:571.5px;width:600px;height:31px;line-height:31px;font-size:24px;color:#f0f0f0;text-align:left;letter-spacing:0.3px;">181</div>
<div class="a" style="left:2483px;top:568.5px;width:146px;height:35px;background:#3a3a3a;border-bottom:1.5px solid #5a5a5a;border-top:1px solid #323232;"></div>
<div class="t" style="left:2490.5px;top:571.5px;width:600px;height:31px;line-height:31px;font-size:24px;color:#f0f0f0;text-align:left;letter-spacing:0.3px;">399</div>
<div class="t" style="left:2348.5px;top:613.0px;width:60px;height:31px;line-height:31px;font-size:24px;color:#e6e6e6;text-align:center;">W</div>
<div class="t" style="left:2538.5px;top:613.0px;width:60px;height:31px;line-height:31px;font-size:24px;color:#e6e6e6;text-align:center;">H</div>
<div class="a" style="left:2135px;top:660px;width:537px;height:1.5px;background:#232323;"></div>
<svg class="a" style="left:2142px;top:673.5px;" width="16" height="14" viewBox="0 0 16 14"><path d="M0.3,0.3H15.7L8,13.7Z" fill="#6c6c6c"/></svg>
<div class="t" style="left:2164.5px;top:668.0px;width:600px;height:30px;line-height:30px;font-size:23px;color:#efefef;text-align:left;font-weight:700;letter-spacing:-0.05px;">Background</div>
<div class="t" style="left:2086.0px;top:726.5px;width:200px;height:26px;line-height:26px;font-size:20px;color:#e6e6e6;text-align:right;letter-spacing:0.68px;">Color</div>
<div class="a" style="left:2292px;top:722.5px;width:276px;height:39.5px;background:#323232;border:1px solid #1c1c1c;border-radius:5px;box-shadow:inset 0 1px 0 rgba(255,255,255,.05);"></div>
<svg class="a" style="left:2546.5px;top:728.75px;" width="12" height="9" viewBox="0 0 12 9"><path d="M6,0.3L11.7,8.7H0.3Z" fill="#9a9a9a"/></svg>
<svg class="a" style="left:2546.5px;top:746.75px;" width="12" height="9" viewBox="0 0 12 9"><path d="M6,8.7L11.7,0.3H0.3Z" fill="#9a9a9a"/></svg>
<div class="a" style="left:2301px;top:733.0px;width:118.5px;height:18px;background:#ff5722;"></div>
<div class="t" style="left:2429.0px;top:726.9px;width:600px;height:36px;line-height:36px;font-size:27.5px;color:#b4b4b4;text-align:left;letter-spacing:0.1px;">current</div>
<div class="a" style="left:2579px;top:719.5px;width:78px;height:41.5px;background:#1f1f1f;border:1.5px solid #737373;border-radius:7px;"></div>
<div class="a" style="left:2585.5px;top:725.5px;width:65px;height:29.5px;background:#ff5722;border-radius:4px;"></div>
<div class="t" style="left:2086.0px;top:780.0px;width:200px;height:26px;line-height:26px;font-size:20px;color:#e6e6e6;text-align:right;letter-spacing:0.68px;">Gradient</div>
<div class="a" style="left:2292px;top:776.0px;width:276px;height:39.5px;background:#323232;border:1px solid #1c1c1c;border-radius:5px;box-shadow:inset 0 1px 0 rgba(255,255,255,.05);"></div>
<svg class="a" style="left:2546.5px;top:782.25px;" width="12" height="9" viewBox="0 0 12 9"><path d="M6,0.3L11.7,8.7H0.3Z" fill="#9a9a9a"/></svg>
<svg class="a" style="left:2546.5px;top:800.25px;" width="12" height="9" viewBox="0 0 12 9"><path d="M6,8.7L11.7,0.3H0.3Z" fill="#9a9a9a"/></svg>
<div class="a" style="left:2301px;top:786.5px;width:118.5px;height:18px;background:linear-gradient(#7d78c6,#3690d8);"></div>
<div class="t" style="left:2429.0px;top:780.4px;width:600px;height:36px;line-height:36px;font-size:27.5px;color:#b4b4b4;text-align:left;letter-spacing:0.1px;">current</div>
<div class="a" style="left:2579px;top:773.0px;width:78px;height:41.5px;background:#1f1f1f;border:1.5px solid #737373;border-radius:7px;"></div>
<div class="a" style="left:2585.5px;top:779.0px;width:65px;height:29.5px;background:linear-gradient(#7d78c6,#3690d8);border-radius:4px;"></div>
<div class="a" style="left:2135px;top:832.5px;width:537px;height:1.5px;background:#232323;"></div>
<svg class="a" style="left:2142px;top:846.0px;" width="16" height="14" viewBox="0 0 16 14"><path d="M0.3,0.3H15.7L8,13.7Z" fill="#6c6c6c"/></svg>
<div class="t" style="left:2164.5px;top:840.5px;width:600px;height:30px;line-height:30px;font-size:23px;color:#efefef;text-align:left;font-weight:700;letter-spacing:-0.05px;">Row Cell</div>
<div class="t" style="left:2086.0px;top:898.3px;width:200px;height:26px;line-height:26px;font-size:20px;color:#e6e6e6;text-align:right;letter-spacing:0.68px;">Text Color</div>
<div class="a" style="left:2292px;top:894.3px;width:276px;height:39.5px;background:#323232;border:1px solid #1c1c1c;border-radius:5px;box-shadow:inset 0 1px 0 rgba(255,255,255,.05);"></div>
<svg class="a" style="left:2546.5px;top:900.55px;" width="12" height="9" viewBox="0 0 12 9"><path d="M6,0.3L11.7,8.7H0.3Z" fill="#9a9a9a"/></svg>
<svg class="a" style="left:2546.5px;top:918.55px;" width="12" height="9" viewBox="0 0 12 9"><path d="M6,8.7L11.7,0.3H0.3Z" fill="#9a9a9a"/></svg>
<div class="a" style="left:2301px;top:904.8px;width:118.5px;height:18px;background:#ffffff;"></div>
<div class="t" style="left:2429.0px;top:898.6px;width:600px;height:36px;line-height:36px;font-size:27.5px;color:#b4b4b4;text-align:left;letter-spacing:0.1px;">current</div>
<div class="a" style="left:2579px;top:891.3px;width:78px;height:41.5px;background:#1f1f1f;border:1.5px solid #737373;border-radius:7px;"></div>
<div class="a" style="left:2585.5px;top:897.3px;width:65px;height:29.5px;background:#ffffff;border-radius:4px;"></div>
<div class="t" style="left:2086.0px;top:952.0px;width:200px;height:26px;line-height:26px;font-size:20px;color:#e6e6e6;text-align:right;letter-spacing:0.68px;">Font</div>
<div class="a" style="left:2293px;top:948px;width:337.5px;height:36.5px;background:#1e1e1e;border:1px solid #3c3c3c;"></div>
<div class="t" style="left:2300.5px;top:953.5px;width:600px;height:29px;line-height:29px;font-size:22px;color:#f2f2f2;text-align:left;letter-spacing:0.3px;">System&nbsp; 12.0</div>
<div class="a" style="left:2594px;top:950.5px;width:32px;height:31.5px;background:#2b2b2b;border:2px solid #a9a9a9;border-radius:5px;"></div>
<svg class="a" style="left:2601.5px;top:961px;" width="17" height="12" viewBox="0 0 17 12"><path d="M0.3,0.3H16.7L8.5,11.7Z" fill="#8a8a8a"/></svg>
<div class="a" style="left:2636px;top:951px;width:18px;height:30.5px;border:1px solid #4a4a4a;border-radius:4px;background:#2a2a2a;"></div>
<svg class="a" style="left:2639px;top:955.5px;" width="12" height="9" viewBox="0 0 12 9"><path d="M6,0.3L11.7,8.7H0.3Z" fill="#9a9a9a"/></svg>
<svg class="a" style="left:2639px;top:968.5px;" width="12" height="9" viewBox="0 0 12 9"><path d="M6,8.7L11.7,0.3H0.3Z" fill="#9a9a9a"/></svg>
<div class="t" style="left:2086.0px;top:1005.5px;width:200px;height:26px;line-height:26px;font-size:20px;color:#e6e6e6;text-align:right;letter-spacing:0.68px;">Align</div>
<div class="a" style="left:2296px;top:1000px;width:360px;height:38px;background:#3a3a3a;border-radius:5px;"></div>
<div class="a" style="left:2296px;top:1000px;width:72px;height:38px;background:linear-gradient(#2268e2,#1557cf);border-radius:5px 0 0 5px;"></div>
<div class="a" style="left:2439.5px;top:1000px;width:1.5px;height:38px;background:#2d2d2d;"></div>
<div class="a" style="left:2511.5px;top:1000px;width:1.5px;height:38px;background:#2d2d2d;"></div>
<div class="a" style="left:2583.5px;top:1000px;width:1.5px;height:38px;background:#2d2d2d;"></div>
<div class="a" style="left:2367.5px;top:1000px;width:1.5px;height:38px;background:#2d2d2d;"></div>
<svg class="a" style="left:2320px;top:1010.5px;" width="20" height="17" viewBox="0 0 20 17"><path d="M1,1.5H19M1,6H13M1,10.5H19M1,15H13" stroke="#0b0b0b" stroke-width="1.9" fill="none"/></svg>
<svg class="a" style="left:2394px;top:1010.5px;" width="20" height="17" viewBox="0 0 20 17"><path d="M1,1.5H19M4,6H16M1,10.5H19M4,15H16" stroke="#0b0b0b" stroke-width="1.9" fill="none"/></svg>
<svg class="a" style="left:2466px;top:1010.5px;" width="20" height="17" viewBox="0 0 20 17"><path d="M1,1.5H19M7,6H19M1,10.5H19M7,15H19" stroke="#0b0b0b" stroke-width="1.9" fill="none"/></svg>
<svg class="a" style="left:2538px;top:1010.5px;" width="20" height="17" viewBox="0 0 20 17"><path d="M1,1.5H19M1,6H19M1,10.5H19M1,15H19" stroke="#0b0b0b" stroke-width="1.9" fill="none"/></svg>
<svg class="a" style="left:2609px;top:1017px;" width="24" height="4" viewBox="0 0 24 4"><path d="M1,2H23" stroke="#0b0b0b" stroke-width="1.8" stroke-dasharray="5 1.5" fill="none"/></svg>
<div class="t" style="left:2086.0px;top:1058.5px;width:200px;height:26px;line-height:26px;font-size:20px;color:#e6e6e6;text-align:right;letter-spacing:0.68px;">Line Break</div>
<div class="a" style="left:2292px;top:1057.5px;width:368px;height:41.5px;background:#323232;border:1px solid #1c1c1c;border-radius:5px;box-shadow:inset 0 1px 0 rgba(255,255,255,.05);"></div>
<svg class="a" style="left:2638.5px;top:1064.75px;" width="12" height="9" viewBox="0 0 12 9"><path d="M6,0.3L11.7,8.7H0.3Z" fill="#9a9a9a"/></svg>
<svg class="a" style="left:2638.5px;top:1082.75px;" width="12" height="9" viewBox="0 0 12 9"><path d="M6,8.7L11.7,0.3H0.3Z" fill="#9a9a9a"/></svg>
<div class="t" style="left:2301.0px;top:1065.2px;width:600px;height:29px;line-height:29px;font-size:22px;color:#b4b4b4;text-align:left;letter-spacing:0.4px;">Truncate Middle</div>
<div class="a" style="left:2158px;top:1110px;width:500px;height:1.5px;background:#353535;"></div>
<div class="t" style="left:2086.0px;top:1127.5px;width:200px;height:26px;line-height:26px;font-size:20px;color:#e6e6e6;text-align:right;letter-spacing:0.68px;">Arrow Type</div>
<div class="a" style="left:2292px;top:1125.5px;width:368px;height:41px;background:#323232;border:1px solid #1c1c1c;border-radius:5px;box-shadow:inset 0 1px 0 rgba(255,255,255,.05);"></div>
<svg class="a" style="left:2638.5px;top:1132.5px;" width="12" height="9" viewBox="0 0 12 9"><path d="M6,0.3L11.7,8.7H0.3Z" fill="#9a9a9a"/></svg>
<svg class="a" style="left:2638.5px;top:1150.5px;" width="12" height="9" viewBox="0 0 12 9"><path d="M6,8.7L11.7,0.3H0.3Z" fill="#9a9a9a"/></svg>
<div class="t" style="left:2301.0px;top:1133.0px;width:600px;height:29px;line-height:29px;font-size:22px;color:#b4b4b4;text-align:left;letter-spacing:0.4px;">Triangle</div>
<div class="t" style="left:2086.0px;top:1186.5px;width:200px;height:26px;line-height:26px;font-size:20px;color:#e6e6e6;text-align:right;letter-spacing:0.68px;">Arrow Color</div>
<div class="a" style="left:2292px;top:1182.5px;width:276px;height:39.5px;background:#323232;border:1px solid #1c1c1c;border-radius:5px;box-shadow:inset 0 1px 0 rgba(255,255,255,.05);"></div>
<svg class="a" style="left:2546.5px;top:1188.75px;" width="12" height="9" viewBox="0 0 12 9"><path d="M6,0.3L11.7,8.7H0.3Z" fill="#9a9a9a"/></svg>
<svg class="a" style="left:2546.5px;top:1206.75px;" width="12" height="9" viewBox="0 0 12 9"><path d="M6,8.7L11.7,0.3H0.3Z" fill="#9a9a9a"/></svg>
<div class="a" style="left:2301px;top:1193.0px;width:118.5px;height:18px;background:#0057b8;"></div>
<div class="t" style="left:2429.0px;top:1186.8px;width:600px;height:36px;line-height:36px;font-size:27.5px;color:#b4b4b4;text-align:left;letter-spacing:0.1px;">current</div>
<div class="a" style="left:2579px;top:1179.5px;width:78px;height:41.5px;background:#1f1f1f;border:1.5px solid #737373;border-radius:7px;"></div>
<div class="a" style="left:2585.5px;top:1185.5px;width:65px;height:29.5px;background:#0057b8;border-radius:4px;"></div>
<div class="t" style="left:2086.0px;top:1255.0px;width:200px;height:26px;line-height:26px;font-size:20px;color:#e6e6e6;text-align:right;letter-spacing:0.68px;">Cell Image</div>
<div class="a" style="left:2294px;top:1252.5px;width:40px;height:39.5px;background:#8b8b99;border-radius:5px;"></div>
<svg class="a" style="left:2299px;top:1258px;" width="30" height="28" viewBox="0 0 30 28"><path d="M1.5,1.5H28.5V26.5H1.5Z" fill="none" stroke="#26262b" stroke-width="2.4"/><circle cx="22" cy="8.5" r="3.2" fill="#26262b"/><path d="M2,26V19L10,12.5L16.5,19.5L21.5,15.5L28,22V26Z" fill="#26262b"/></svg>
<div class="a" style="left:2342.5px;top:1253px;width:239px;height:42px;background:#323232;border:1px solid #1c1c1c;border-radius:5px;box-shadow:inset 0 1px 0 rgba(255,255,255,.05);"></div>
<svg class="a" style="left:2560.0px;top:1260.5px;" width="12" height="9" viewBox="0 0 12 9"><path d="M6,0.3L11.7,8.7H0.3Z" fill="#9a9a9a"/></svg>
<svg class="a" style="left:2560.0px;top:1278.5px;" width="12" height="9" viewBox="0 0 12 9"><path d="M6,8.7L11.7,0.3H0.3Z" fill="#9a9a9a"/></svg>
<div class="a" style="left:2594px;top:1253px;width:40px;height:38px;background:#6a6a6a;border-radius:6px;"></div>
<div class="t" style="left:2594.0px;top:1260.5px;width:40px;height:31px;line-height:31px;font-size:24px;color:#c9c9c9;text-align:center;font-weight:700;">..</div>
<div class="a" style="left:2158px;top:1322px;width:500px;height:1.5px;background:#353535;"></div>
<div class="t" style="left:2086.0px;top:1350.0px;width:200px;height:26px;line-height:26px;font-size:20px;color:#e6e6e6;text-align:right;letter-spacing:0.68px;">Border Color</div>
<div class="a" style="left:2292px;top:1346px;width:276px;height:39.5px;background:#323232;border:1px solid #1c1c1c;border-radius:5px;box-shadow:inset 0 1px 0 rgba(255,255,255,.05);"></div>
<svg class="a" style="left:2546.5px;top:1352.25px;" width="12" height="9" viewBox="0 0 12 9"><path d="M6,0.3L11.7,8.7H0.3Z" fill="#9a9a9a"/></svg>
<svg class="a" style="left:2546.5px;top:1370.25px;" width="12" height="9" viewBox="0 0 12 9"><path d="M6,8.7L11.7,0.3H0.3Z" fill="#9a9a9a"/></svg>
<div class="a" style="left:2301px;top:1356.5px;width:118.5px;height:18px;background:#2f2f2f;border:2px solid #0c0c0c;"></div>
<div class="t" style="left:2429.0px;top:1350.3px;width:600px;height:36px;line-height:36px;font-size:27.5px;color:#b4b4b4;text-align:left;letter-spacing:0.1px;">current</div>
<svg class="a" style="left:2301px;top:1356.5px;" width="118.5" height="18" viewBox="0 0 118.5 18"><path d="M1,17L117.5,1" stroke="#0c0c0c" stroke-width="1.3"/></svg>
<div class="a" style="left:2579px;top:1343.5px;width:78px;height:41.5px;background:#1f1f1f;border:1.5px solid #737373;border-radius:7px;"></div>
<div class="a" style="left:2585.5px;top:1349.5px;width:65px;height:29.5px;background:#232323;border:1.5px solid #a5a5a5;border-radius:4px;"></div>
<div class="t" style="left:2086.0px;top:1404.5px;width:200px;height:26px;line-height:26px;font-size:20px;color:#e6e6e6;text-align:right;letter-spacing:0.68px;">Border Width</div>
<div class="a" style="left:2302px;top:1415.5px;width:238px;height:5px;background:#4b4b4b;border-radius:2.5px;"></div>
<div class="a" style="left:2300px;top:1402.5px;width:31px;height:31px;background:#cfcfcf;border-radius:50%;box-shadow:0 1px 2px rgba(0,0,0,.5);"></div>
<div class="a" style="left:2551px;top:1401.5px;width:80px;height:33.5px;background:#3a3a3a;border-bottom:1.5px solid #5a5a5a;"></div>
<div class="t" style="left:2558.0px;top:1404.5px;width:600px;height:31px;line-height:31px;font-size:24px;color:#f0f0f0;text-align:left;letter-spacing:0.3px;">0.5</div>
<div class="a" style="left:2637.5px;top:1403px;width:18.5px;height:30.5px;border:1px solid #4a4a4a;border-radius:4px;background:#2a2a2a;"></div>
<svg class="a" style="left:2640.7px;top:1407.5px;" width="12" height="9" viewBox="0 0 12 9"><path d="M6,0.3L11.7,8.7H0.3Z" fill="#9a9a9a"/></svg>
<svg class="a" style="left:2640.7px;top:1420.5px;" width="12" height="9" viewBox="0 0 12 9"><path d="M6,8.7L11.7,0.3H0.3Z" fill="#9a9a9a"/></svg>
<div class="a" style="left:2158px;top:1449.5px;width:500px;height:1.5px;background:#353535;"></div>
<div class="t" style="left:2086.0px;top:1478.5px;width:200px;height:26px;line-height:26px;font-size:20px;color:#e6e6e6;text-align:right;letter-spacing:0.68px;">Fill Color</div>
<div class="a" style="left:2292px;top:1474.5px;width:276px;height:39.5px;background:#323232;border:1px solid #1c1c1c;border-radius:5px;box-shadow:inset 0 1px 0 rgba(255,255,255,.05);"></div>
<svg class="a" style="left:2546.5px;top:1480.75px;" width="12" height="9" viewBox="0 0 12 9"><path d="M6,0.3L11.7,8.7H0.3Z" fill="#9a9a9a"/></svg>
<svg class="a" style="left:2546.5px;top:1498.75px;" width="12" height="9" viewBox="0 0 12 9"><path d="M6,8.7L11.7,0.3H0.3Z" fill="#9a9a9a"/></svg>
<div class="a" style="left:2301px;top:1485.0px;width:118.5px;height:18px;background:#9c27b0;"></div>
<div class="t" style="left:2429.0px;top:1478.8px;width:600px;height:36px;line-height:36px;font-size:27.5px;color:#b4b4b4;text-align:left;letter-spacing:0.1px;">current</div>
<div class="a" style="left:2579px;top:1471.5px;width:78px;height:41.5px;background:#1f1f1f;border:1.5px solid #737373;border-radius:7px;"></div>
<div class="a" style="left:2585.5px;top:1477.5px;width:65px;height:29.5px;background:#9c27b0;border-radius:4px;"></div>
<div class="t" style="left:2086.0px;top:1532.2px;width:200px;height:26px;line-height:26px;font-size:20px;color:#e6e6e6;text-align:right;letter-spacing:0.68px;">Gradient</div>
<div class="a" style="left:2292px;top:1528.2px;width:276px;height:39.5px;background:#323232;border:1px solid #1c1c1c;border-radius:5px;box-shadow:inset 0 1px 0 rgba(255,255,255,.05);"></div>
<svg class="a" style="left:2546.5px;top:1534.45px;" width="12" height="9" viewBox="0 0 12 9"><path d="M6,0.3L11.7,8.7H0.3Z" fill="#9a9a9a"/></svg>
<svg class="a" style="left:2546.5px;top:1552.45px;" width="12" height="9" viewBox="0 0 12 9"><path d="M6,8.7L11.7,0.3H0.3Z" fill="#9a9a9a"/></svg>
<div class="a" style="left:2301px;top:1538.7px;width:118.5px;height:18px;background:#ee3349;"></div>
<div class="t" style="left:2429.0px;top:1532.5px;width:600px;height:36px;line-height:36px;font-size:27.5px;color:#b4b4b4;text-align:left;letter-spacing:0.1px;">current</div>
<div class="a" style="left:2579px;top:1525.2px;width:78px;height:41.5px;background:#1f1f1f;border:1.5px solid #737373;border-radius:7px;"></div>
<div class="a" style="left:2585.5px;top:1531.2px;width:65px;height:29.5px;background:#ee3349;border-radius:4px;"></div>
</div></div>
<div id="edge"></div>
</body></html>
